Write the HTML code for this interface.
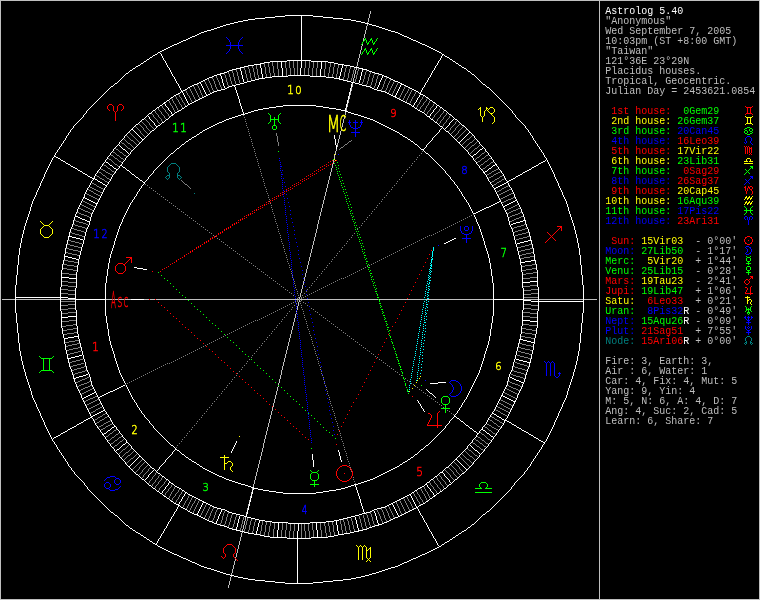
<!DOCTYPE html>
<html><head><meta charset="utf-8"><title>Astrolog 5.40</title>
<style>
html,body{margin:0;padding:0;background:#000;overflow:hidden}
svg{display:block}
.px path{fill:none;stroke-width:1;shape-rendering:crispEdges}
.s{font-family:"Liberation Mono",monospace;font-size:10px;white-space:pre}
.d text{font-family:"DejaVu Sans","Liberation Sans",sans-serif;font-weight:200;vector-effect:non-scaling-stroke}
.w{fill:#ffffff}
.l{fill:#bfbfbf}
.r{fill:#ff0000}
.y{fill:#ffff00}
.g{fill:#00ff00}
.b{fill:#0000ff}
.c{fill:#007f7f}
</style></head>
<body>
<svg width="760" height="600" viewBox="0 0 760 600">
<rect width="760" height="600" fill="#000"/>
<g class="px" transform="translate(0,0.5)">
<path stroke="#007f7f" d="M171 163h5M170 164h1M176 164h1M169 165h1M177 165h1M168 166h1M178 166h1M167 167h1M179 167h1M167 168h1M179 168h1M167 169h1M179 169h1M167 170h1M179 170h1M167 171h1M179 171h1M168 172h1M178 172h1M169 173h1M177 173h1M169 174h1M177 174h1M167 175h3M177 175h3M166 176h1M169 176h1M177 176h1M180 176h1M165 177h1M169 177h1M177 177h1M181 177h1M166 178h1M168 178h1M178 178h1M180 178h1M167 179h1M179 179h1M194 193h1M747 336h3M746 337h1M750 337h1M745 338h1M751 338h1M745 339h1M751 339h1M745 340h1M751 340h1M746 341h1M750 341h1M745 342h2M750 342h2M744 343h1M746 343h1M750 343h1M752 343h1M745 344h1M751 344h1"/>
<path stroke="#bfbfbf" d="M0 0h760M0 1h1M599 1h1M759 1h1M0 2h1M599 2h1M759 2h1M0 3h1M599 3h1M759 3h1M0 4h1M599 4h1M759 4h1M0 5h1M599 5h1M759 5h1M0 6h1M599 6h1M759 6h1M0 7h1M599 7h1M759 7h1M0 8h1M599 8h1M759 8h1M0 9h1M599 9h1M759 9h1M0 10h1M599 10h1M759 10h1M0 11h1M370 11h1M599 11h1M759 11h1M0 12h1M370 12h1M599 12h1M759 12h1M0 13h1M370 13h1M599 13h1M759 13h1M0 14h1M369 14h1M599 14h1M759 14h1M0 15h1M369 15h1M599 15h1M759 15h1M0 16h1M369 16h1M599 16h1M759 16h1M0 17h1M369 17h1M599 17h1M759 17h1M0 18h1M368 18h1M599 18h1M759 18h1M0 19h1M368 19h1M599 19h1M759 19h1M0 20h1M368 20h1M599 20h1M759 20h1M0 21h1M368 21h1M599 21h1M759 21h1M0 22h1M367 22h1M599 22h1M759 22h1M0 23h1M599 23h1M759 23h1M0 24h1M367 24h1M599 24h1M759 24h1M0 25h1M367 25h1M599 25h1M759 25h1M0 26h1M366 26h1M599 26h1M759 26h1M0 27h1M366 27h1M599 27h1M759 27h1M0 28h1M366 28h1M599 28h1M759 28h1M0 29h1M366 29h1M599 29h1M759 29h1M0 30h1M365 30h1M599 30h1M759 30h1M0 31h1M365 31h1M599 31h1M759 31h1M0 32h1M365 32h1M599 32h1M759 32h1M0 33h1M365 33h1M599 33h1M759 33h1M0 34h1M364 34h1M599 34h1M759 34h1M0 35h1M364 35h1M599 35h1M759 35h1M0 36h1M364 36h1M599 36h1M759 36h1M0 37h1M364 37h1M599 37h1M759 37h1M0 38h1M363 38h1M599 38h1M759 38h1M0 39h1M363 39h1M599 39h1M759 39h1M0 40h1M363 40h1M599 40h1M759 40h1M0 41h1M599 41h1M759 41h1M0 42h1M599 42h1M759 42h1M0 43h1M599 43h1M759 43h1M0 44h1M362 44h1M599 44h1M759 44h1M0 45h1M362 45h1M599 45h1M759 45h1M0 46h1M361 46h1M599 46h1M759 46h1M0 47h1M361 47h1M599 47h1M759 47h1M0 48h1M361 48h1M599 48h1M759 48h1M0 49h1M361 49h1M599 49h1M759 49h1M0 50h1M360 50h1M599 50h1M759 50h1M0 51h1M360 51h1M599 51h1M759 51h1M0 52h1M360 52h1M599 52h1M759 52h1M0 53h1M360 53h1M599 53h1M759 53h1M0 54h1M359 54h1M599 54h1M759 54h1M0 55h1M359 55h1M599 55h1M759 55h1M0 56h1M359 56h1M599 56h1M759 56h1M0 57h1M359 57h1M599 57h1M759 57h1M0 58h1M358 58h1M599 58h1M759 58h1M0 59h1M358 59h1M599 59h1M759 59h1M0 60h1M358 60h1M599 60h1M759 60h1M0 61h1M358 61h1M599 61h1M759 61h1M0 62h1M357 62h1M599 62h1M759 62h1M0 63h1M357 63h1M599 63h1M759 63h1M0 64h1M357 64h1M599 64h1M759 64h1M0 65h1M357 65h1M599 65h1M759 65h1M0 66h1M356 66h1M599 66h1M759 66h1M0 67h1M599 67h1M759 67h1M0 68h1M356 68h1M599 68h1M759 68h1M0 69h1M356 69h1M599 69h1M759 69h1M0 70h1M355 70h1M599 70h1M759 70h1M0 71h1M355 71h1M599 71h1M759 71h1M0 72h1M355 72h1M599 72h1M759 72h1M0 73h1M355 73h1M599 73h1M759 73h1M0 74h1M354 74h1M599 74h1M759 74h1M0 75h1M354 75h1M599 75h1M759 75h1M0 76h1M354 76h1M599 76h1M759 76h1M0 77h1M354 77h1M599 77h1M759 77h1M0 78h1M353 78h1M599 78h1M759 78h1M0 79h1M353 79h1M599 79h1M759 79h1M0 80h1M353 80h1M599 80h1M759 80h1M0 81h1M353 81h1M599 81h1M759 81h1M0 82h1M599 82h1M759 82h1M0 83h1M599 83h1M759 83h1M0 84h1M352 84h1M599 84h1M759 84h1M0 85h1M352 85h1M599 85h1M759 85h1M0 86h1M352 86h1M599 86h1M759 86h1M0 87h1M599 87h1M759 87h1M0 88h1M351 88h1M599 88h1M759 88h1M0 89h1M351 89h1M599 89h1M759 89h1M0 90h1M351 90h1M599 90h1M759 90h1M0 91h1M599 91h1M759 91h1M0 92h1M350 92h1M599 92h1M759 92h1M0 93h1M350 93h1M599 93h1M759 93h1M0 94h1M350 94h1M599 94h1M759 94h1M0 95h1M599 95h1M759 95h1M0 96h1M349 96h1M599 96h1M759 96h1M0 97h1M349 97h1M599 97h1M759 97h1M0 98h1M349 98h1M599 98h1M759 98h1M0 99h1M599 99h1M759 99h1M0 100h1M348 100h1M599 100h1M759 100h1M0 101h1M348 101h1M599 101h1M759 101h1M0 102h1M348 102h1M599 102h1M759 102h1M0 103h1M599 103h1M759 103h1M0 104h1M347 104h1M599 104h1M759 104h1M0 105h1M347 105h1M599 105h1M759 105h1M0 106h1M347 106h1M599 106h1M759 106h1M0 107h1M599 107h1M759 107h1M0 108h1M346 108h1M599 108h1M759 108h1M0 109h1M346 109h1M599 109h1M759 109h1M0 110h1M346 110h1M599 110h1M759 110h1M0 111h1M599 111h1M759 111h1M0 112h1M345 112h1M599 112h1M759 112h1M0 113h1M345 113h1M599 113h1M759 113h1M0 114h1M345 114h1M599 114h1M759 114h1M0 115h1M344 115h1M599 115h1M759 115h1M0 116h1M344 116h1M599 116h1M759 116h1M0 117h1M344 117h1M599 117h1M759 117h1M0 118h1M344 118h1M599 118h1M759 118h1M0 119h1M343 119h1M599 119h1M759 119h1M0 120h1M343 120h1M599 120h1M759 120h1M0 121h1M343 121h1M599 121h1M759 121h1M0 122h1M343 122h1M599 122h1M759 122h1M0 123h1M342 123h1M599 123h1M759 123h1M0 124h1M342 124h1M599 124h1M759 124h1M0 125h1M342 125h1M599 125h1M759 125h1M0 126h1M342 126h1M599 126h1M759 126h1M0 127h1M341 127h1M599 127h1M759 127h1M0 128h1M341 128h1M599 128h1M759 128h1M0 129h1M341 129h1M599 129h1M759 129h1M0 130h1M341 130h1M599 130h1M759 130h1M0 131h1M340 131h1M599 131h1M759 131h1M0 132h1M340 132h1M599 132h1M759 132h1M0 133h1M340 133h1M599 133h1M759 133h1M0 134h1M340 134h1M599 134h1M759 134h1M0 135h1M339 135h1M599 135h1M759 135h1M0 136h1M339 136h1M599 136h1M759 136h1M0 137h1M339 137h1M599 137h1M759 137h1M0 138h1M339 138h1M599 138h1M759 138h1M0 139h1M338 139h1M599 139h1M759 139h1M0 140h1M338 140h1M599 140h1M759 140h1M0 141h1M338 141h1M599 141h1M759 141h1M0 142h1M338 142h1M599 142h1M759 142h1M0 143h1M337 143h1M599 143h1M759 143h1M0 144h1M337 144h1M599 144h1M759 144h1M0 145h1M337 145h1M599 145h1M759 145h1M0 146h1M337 146h1M599 146h1M759 146h1M0 147h1M599 147h1M759 147h1M0 148h1M599 148h1M759 148h1M0 149h1M336 149h1M599 149h1M759 149h1M0 150h1M336 150h1M599 150h1M759 150h1M0 151h1M335 151h1M599 151h1M759 151h1M0 152h1M335 152h1M599 152h1M759 152h1M0 153h1M335 153h1M599 153h1M759 153h1M0 154h1M335 154h1M599 154h1M759 154h1M0 155h1M334 155h1M599 155h1M759 155h1M0 156h1M334 156h1M599 156h1M759 156h1M0 157h1M334 157h1M599 157h1M759 157h1M0 158h1M334 158h1M599 158h1M759 158h1M0 159h1M599 159h1M759 159h1M0 160h1M333 160h1M599 160h1M759 160h1M0 161h1M333 161h1M599 161h1M759 161h1M0 162h1M333 162h1M599 162h1M759 162h1M0 163h1M333 163h1M599 163h1M759 163h1M0 164h1M332 164h1M599 164h1M759 164h1M0 165h1M332 165h1M599 165h1M759 165h1M0 166h1M332 166h1M599 166h1M759 166h1M0 167h1M332 167h1M599 167h1M759 167h1M0 168h1M331 168h1M599 168h1M759 168h1M0 169h1M331 169h1M599 169h1M759 169h1M0 170h1M331 170h1M599 170h1M759 170h1M0 171h1M331 171h1M599 171h1M759 171h1M0 172h1M330 172h1M599 172h1M759 172h1M0 173h1M330 173h1M599 173h1M759 173h1M0 174h1M330 174h1M599 174h1M759 174h1M0 175h1M330 175h1M599 175h1M759 175h1M0 176h1M329 176h1M599 176h1M759 176h1M0 177h1M329 177h1M599 177h1M759 177h1M0 178h1M329 178h1M599 178h1M759 178h1M0 179h1M329 179h1M599 179h1M759 179h1M0 180h1M328 180h1M599 180h1M759 180h1M0 181h1M328 181h1M599 181h1M759 181h1M0 182h1M328 182h1M599 182h1M759 182h1M0 183h1M328 183h1M599 183h1M759 183h1M0 184h1M327 184h1M599 184h1M759 184h1M0 185h1M327 185h1M599 185h1M759 185h1M0 186h1M327 186h1M599 186h1M759 186h1M0 187h1M327 187h1M599 187h1M759 187h1M0 188h1M326 188h1M599 188h1M759 188h1M0 189h1M326 189h1M599 189h1M759 189h1M0 190h1M326 190h1M599 190h1M759 190h1M0 191h1M326 191h1M599 191h1M759 191h1M0 192h1M325 192h1M599 192h1M759 192h1M0 193h1M325 193h1M599 193h1M759 193h1M0 194h1M325 194h1M599 194h1M759 194h1M0 195h1M325 195h1M599 195h1M759 195h1M0 196h1M324 196h1M599 196h1M759 196h1M0 197h1M324 197h1M599 197h1M759 197h1M0 198h1M324 198h1M599 198h1M759 198h1M0 199h1M324 199h1M599 199h1M759 199h1M0 200h1M323 200h1M599 200h1M759 200h1M0 201h1M323 201h1M599 201h1M759 201h1M0 202h1M323 202h1M599 202h1M759 202h1M0 203h1M323 203h1M599 203h1M759 203h1M0 204h1M322 204h1M599 204h1M759 204h1M0 205h1M322 205h1M599 205h1M759 205h1M0 206h1M322 206h1M599 206h1M759 206h1M0 207h1M322 207h1M599 207h1M759 207h1M0 208h1M321 208h1M599 208h1M759 208h1M0 209h1M321 209h1M599 209h1M759 209h1M0 210h1M321 210h1M599 210h1M759 210h1M0 211h1M321 211h1M599 211h1M759 211h1M0 212h1M320 212h1M599 212h1M759 212h1M0 213h1M320 213h1M599 213h1M759 213h1M0 214h1M320 214h1M599 214h1M759 214h1M0 215h1M320 215h1M599 215h1M759 215h1M0 216h1M319 216h1M599 216h1M759 216h1M0 217h1M319 217h1M599 217h1M759 217h1M0 218h1M319 218h1M599 218h1M759 218h1M0 219h1M319 219h1M599 219h1M759 219h1M0 220h1M318 220h1M599 220h1M759 220h1M0 221h1M318 221h1M599 221h1M759 221h1M0 222h1M318 222h1M599 222h1M759 222h1M0 223h1M318 223h1M599 223h1M759 223h1M0 224h1M317 224h1M599 224h1M759 224h1M0 225h1M317 225h1M599 225h1M759 225h1M0 226h1M317 226h1M599 226h1M759 226h1M0 227h1M317 227h1M599 227h1M759 227h1M0 228h1M317 228h1M599 228h1M759 228h1M0 229h1M316 229h1M599 229h1M759 229h1M0 230h1M316 230h1M599 230h1M759 230h1M0 231h1M316 231h1M599 231h1M759 231h1M0 232h1M316 232h1M599 232h1M759 232h1M0 233h1M315 233h1M599 233h1M759 233h1M0 234h1M315 234h1M599 234h1M759 234h1M0 235h1M315 235h1M599 235h1M759 235h1M0 236h1M315 236h1M599 236h1M759 236h1M0 237h1M314 237h1M599 237h1M759 237h1M0 238h1M314 238h1M599 238h1M759 238h1M0 239h1M314 239h1M599 239h1M759 239h1M0 240h1M314 240h1M599 240h1M759 240h1M0 241h1M313 241h1M599 241h1M759 241h1M0 242h1M313 242h1M599 242h1M759 242h1M0 243h1M313 243h1M599 243h1M759 243h1M0 244h1M313 244h1M599 244h1M759 244h1M0 245h1M312 245h1M599 245h1M759 245h1M0 246h1M312 246h1M599 246h1M759 246h1M0 247h1M312 247h1M599 247h1M759 247h1M0 248h1M312 248h1M599 248h1M759 248h1M0 249h1M311 249h1M599 249h1M759 249h1M0 250h1M311 250h1M599 250h1M759 250h1M0 251h1M311 251h1M599 251h1M759 251h1M0 252h1M311 252h1M599 252h1M759 252h1M0 253h1M310 253h1M599 253h1M759 253h1M0 254h1M310 254h1M599 254h1M759 254h1M0 255h1M310 255h1M599 255h1M759 255h1M0 256h1M310 256h1M599 256h1M759 256h1M0 257h1M309 257h1M599 257h1M759 257h1M0 258h1M309 258h1M599 258h1M759 258h1M0 259h1M309 259h1M599 259h1M759 259h1M0 260h1M309 260h1M599 260h1M759 260h1M0 261h1M308 261h1M599 261h1M759 261h1M0 262h1M308 262h1M599 262h1M759 262h1M0 263h1M308 263h1M599 263h1M759 263h1M0 264h1M308 264h1M599 264h1M759 264h1M0 265h1M307 265h1M599 265h1M759 265h1M0 266h1M307 266h1M599 266h1M759 266h1M0 267h1M307 267h1M599 267h1M759 267h1M0 268h1M307 268h1M599 268h1M759 268h1M0 269h1M306 269h1M599 269h1M759 269h1M0 270h1M306 270h1M599 270h1M759 270h1M0 271h1M306 271h1M599 271h1M759 271h1M0 272h1M306 272h1M599 272h1M759 272h1M0 273h1M305 273h1M599 273h1M759 273h1M0 274h1M305 274h1M599 274h1M759 274h1M0 275h1M305 275h1M599 275h1M759 275h1M0 276h1M305 276h1M599 276h1M759 276h1M0 277h1M304 277h1M599 277h1M759 277h1M0 278h1M304 278h1M599 278h1M759 278h1M0 279h1M304 279h1M599 279h1M759 279h1M0 280h1M304 280h1M599 280h1M759 280h1M0 281h1M303 281h1M599 281h1M759 281h1M0 282h1M303 282h1M599 282h1M759 282h1M0 283h1M303 283h1M599 283h1M759 283h1M0 284h1M303 284h1M599 284h1M759 284h1M0 285h1M302 285h1M599 285h1M759 285h1M0 286h1M302 286h1M599 286h1M759 286h1M0 287h1M302 287h1M599 287h1M759 287h1M0 288h1M302 288h1M599 288h1M759 288h1M0 289h1M301 289h1M599 289h1M759 289h1M0 290h1M301 290h1M599 290h1M759 290h1M0 291h1M301 291h1M599 291h1M759 291h1M0 292h1M301 292h1M599 292h1M759 292h1M0 293h1M300 293h1M599 293h1M759 293h1M0 294h1M300 294h1M599 294h1M759 294h1M0 295h1M300 295h1M599 295h1M759 295h1M0 296h1M300 296h1M599 296h1M759 296h1M0 297h1M299 297h1M599 297h1M759 297h1M0 298h1M299 298h1M599 298h1M759 298h1M0 299h1M2 299h13M16 299h44M61 299h14M106 299h25M144 299h5M150 299h5M156 299h143M300 299h78M379 299h45M425 299h68M524 299h14M539 299h44M584 299h13M599 299h1M759 299h1M0 300h1M299 300h1M599 300h1M759 300h1M0 301h1M299 301h1M599 301h1M759 301h1M0 302h1M298 302h1M599 302h1M759 302h1M0 303h1M298 303h1M599 303h1M759 303h1M0 304h1M298 304h1M599 304h1M759 304h1M0 305h1M298 305h1M599 305h1M759 305h1M0 306h1M297 306h1M599 306h1M759 306h1M0 307h1M297 307h1M599 307h1M759 307h1M0 308h1M297 308h1M599 308h1M759 308h1M0 309h1M297 309h1M599 309h1M759 309h1M0 310h1M599 310h1M759 310h1M0 311h1M296 311h1M599 311h1M759 311h1M0 312h1M599 312h1M759 312h1M0 313h1M296 313h1M599 313h1M759 313h1M0 314h1M295 314h1M599 314h1M759 314h1M0 315h1M295 315h1M599 315h1M759 315h1M0 316h1M295 316h1M599 316h1M759 316h1M0 317h1M295 317h1M599 317h1M759 317h1M0 318h1M294 318h1M599 318h1M759 318h1M0 319h1M294 319h1M599 319h1M759 319h1M0 320h1M294 320h1M599 320h1M759 320h1M0 321h1M294 321h1M599 321h1M759 321h1M0 322h1M293 322h1M599 322h1M759 322h1M0 323h1M293 323h1M599 323h1M759 323h1M0 324h1M293 324h1M599 324h1M759 324h1M0 325h1M293 325h1M599 325h1M759 325h1M0 326h1M292 326h1M599 326h1M759 326h1M0 327h1M292 327h1M599 327h1M759 327h1M0 328h1M292 328h1M599 328h1M759 328h1M0 329h1M292 329h1M599 329h1M759 329h1M0 330h1M291 330h1M599 330h1M759 330h1M0 331h1M291 331h1M599 331h1M759 331h1M0 332h1M291 332h1M599 332h1M759 332h1M0 333h1M291 333h1M599 333h1M759 333h1M0 334h1M290 334h1M599 334h1M759 334h1M0 335h1M290 335h1M599 335h1M759 335h1M0 336h1M290 336h1M599 336h1M759 336h1M0 337h1M290 337h1M599 337h1M759 337h1M0 338h1M289 338h1M599 338h1M759 338h1M0 339h1M289 339h1M599 339h1M759 339h1M0 340h1M289 340h1M599 340h1M759 340h1M0 341h1M289 341h1M599 341h1M759 341h1M0 342h1M288 342h1M599 342h1M759 342h1M0 343h1M288 343h1M599 343h1M759 343h1M0 344h1M288 344h1M599 344h1M759 344h1M0 345h1M288 345h1M599 345h1M759 345h1M0 346h1M287 346h1M599 346h1M759 346h1M0 347h1M287 347h1M599 347h1M759 347h1M0 348h1M287 348h1M599 348h1M759 348h1M0 349h1M287 349h1M599 349h1M759 349h1M0 350h1M286 350h1M599 350h1M759 350h1M0 351h1M286 351h1M599 351h1M759 351h1M0 352h1M286 352h1M599 352h1M759 352h1M0 353h1M286 353h1M599 353h1M759 353h1M0 354h1M285 354h1M599 354h1M759 354h1M0 355h1M285 355h1M599 355h1M759 355h1M0 356h1M285 356h1M599 356h1M759 356h1M0 357h1M285 357h1M599 357h1M759 357h1M0 358h1M284 358h1M599 358h1M759 358h1M0 359h1M284 359h1M599 359h1M759 359h1M0 360h1M284 360h1M599 360h1M759 360h1M0 361h1M284 361h1M599 361h1M759 361h1M0 362h1M283 362h1M599 362h1M759 362h1M0 363h1M283 363h1M599 363h1M759 363h1M0 364h1M283 364h1M599 364h1M759 364h1M0 365h1M283 365h1M599 365h1M759 365h1M0 366h1M282 366h1M599 366h1M759 366h1M0 367h1M282 367h1M599 367h1M759 367h1M0 368h1M282 368h1M599 368h1M759 368h1M0 369h1M282 369h1M599 369h1M759 369h1M0 370h1M281 370h1M599 370h1M759 370h1M0 371h1M281 371h1M599 371h1M759 371h1M0 372h1M281 372h1M599 372h1M759 372h1M0 373h1M281 373h1M599 373h1M759 373h1M0 374h1M281 374h1M599 374h1M759 374h1M0 375h1M280 375h1M599 375h1M759 375h1M0 376h1M280 376h1M599 376h1M759 376h1M0 377h1M280 377h1M599 377h1M759 377h1M0 378h1M280 378h1M599 378h1M759 378h1M0 379h1M279 379h1M599 379h1M759 379h1M0 380h1M279 380h1M599 380h1M759 380h1M0 381h1M279 381h1M599 381h1M759 381h1M0 382h1M279 382h1M599 382h1M759 382h1M0 383h1M278 383h1M599 383h1M759 383h1M0 384h1M278 384h1M599 384h1M759 384h1M0 385h1M599 385h1M759 385h1M0 386h1M278 386h1M599 386h1M759 386h1M0 387h1M277 387h1M599 387h1M759 387h1M0 388h1M277 388h1M599 388h1M759 388h1M0 389h1M277 389h1M599 389h1M759 389h1M0 390h1M277 390h1M599 390h1M759 390h1M0 391h1M276 391h1M599 391h1M759 391h1M0 392h1M276 392h1M599 392h1M759 392h1M0 393h1M276 393h1M599 393h1M759 393h1M0 394h1M276 394h1M599 394h1M759 394h1M0 395h1M275 395h1M599 395h1M759 395h1M0 396h1M275 396h1M599 396h1M759 396h1M0 397h1M275 397h1M599 397h1M759 397h1M0 398h1M275 398h1M599 398h1M759 398h1M0 399h1M274 399h1M599 399h1M759 399h1M0 400h1M274 400h1M599 400h1M759 400h1M0 401h1M274 401h1M599 401h1M759 401h1M0 402h1M274 402h1M599 402h1M759 402h1M0 403h1M273 403h1M599 403h1M759 403h1M0 404h1M273 404h1M599 404h1M759 404h1M0 405h1M273 405h1M599 405h1M759 405h1M0 406h1M273 406h1M599 406h1M759 406h1M0 407h1M272 407h1M599 407h1M759 407h1M0 408h1M272 408h1M599 408h1M759 408h1M0 409h1M272 409h1M599 409h1M759 409h1M0 410h1M272 410h1M599 410h1M759 410h1M0 411h1M271 411h1M599 411h1M759 411h1M0 412h1M271 412h1M599 412h1M759 412h1M0 413h1M271 413h1M599 413h1M759 413h1M0 414h1M271 414h1M599 414h1M759 414h1M0 415h1M270 415h1M599 415h1M759 415h1M0 416h1M270 416h1M599 416h1M759 416h1M0 417h1M270 417h1M599 417h1M759 417h1M0 418h1M270 418h1M599 418h1M759 418h1M0 419h1M269 419h1M599 419h1M759 419h1M0 420h1M269 420h1M599 420h1M759 420h1M0 421h1M269 421h1M599 421h1M759 421h1M0 422h1M269 422h1M599 422h1M759 422h1M0 423h1M268 423h1M599 423h1M759 423h1M0 424h1M268 424h1M599 424h1M759 424h1M0 425h1M268 425h1M599 425h1M759 425h1M0 426h1M268 426h1M599 426h1M759 426h1M0 427h1M267 427h1M599 427h1M759 427h1M0 428h1M267 428h1M599 428h1M759 428h1M0 429h1M267 429h1M599 429h1M759 429h1M0 430h1M267 430h1M599 430h1M759 430h1M0 431h1M266 431h1M599 431h1M759 431h1M0 432h1M266 432h1M599 432h1M759 432h1M0 433h1M266 433h1M599 433h1M759 433h1M0 434h1M266 434h1M599 434h1M759 434h1M0 435h1M265 435h1M599 435h1M759 435h1M0 436h1M265 436h1M599 436h1M759 436h1M0 437h1M265 437h1M599 437h1M759 437h1M0 438h1M265 438h1M599 438h1M759 438h1M0 439h1M264 439h1M599 439h1M759 439h1M0 440h1M264 440h1M599 440h1M759 440h1M0 441h1M264 441h1M599 441h1M759 441h1M0 442h1M264 442h1M599 442h1M759 442h1M0 443h1M263 443h1M599 443h1M759 443h1M0 444h1M263 444h1M599 444h1M759 444h1M0 445h1M263 445h1M599 445h1M759 445h1M0 446h1M263 446h1M599 446h1M759 446h1M0 447h1M263 447h1M599 447h1M759 447h1M0 448h1M262 448h1M599 448h1M759 448h1M0 449h1M262 449h1M599 449h1M759 449h1M0 450h1M262 450h1M599 450h1M759 450h1M0 451h1M262 451h1M599 451h1M759 451h1M0 452h1M261 452h1M599 452h1M759 452h1M0 453h1M261 453h1M599 453h1M759 453h1M0 454h1M261 454h1M599 454h1M759 454h1M0 455h1M261 455h1M599 455h1M759 455h1M0 456h1M260 456h1M599 456h1M759 456h1M0 457h1M260 457h1M599 457h1M759 457h1M0 458h1M260 458h1M599 458h1M759 458h1M0 459h1M260 459h1M599 459h1M759 459h1M0 460h1M259 460h1M599 460h1M759 460h1M0 461h1M259 461h1M599 461h1M759 461h1M0 462h1M259 462h1M599 462h1M759 462h1M0 463h1M259 463h1M599 463h1M759 463h1M0 464h1M258 464h1M599 464h1M759 464h1M0 465h1M258 465h1M599 465h1M759 465h1M0 466h1M258 466h1M599 466h1M759 466h1M0 467h1M258 467h1M599 467h1M759 467h1M0 468h1M257 468h1M599 468h1M759 468h1M0 469h1M257 469h1M599 469h1M759 469h1M0 470h1M257 470h1M599 470h1M759 470h1M0 471h1M257 471h1M599 471h1M759 471h1M0 472h1M256 472h1M599 472h1M759 472h1M0 473h1M256 473h1M599 473h1M759 473h1M0 474h1M256 474h1M599 474h1M759 474h1M0 475h1M256 475h1M599 475h1M759 475h1M0 476h1M255 476h1M599 476h1M759 476h1M0 477h1M255 477h1M599 477h1M759 477h1M0 478h1M255 478h1M599 478h1M759 478h1M0 479h1M255 479h1M599 479h1M759 479h1M0 480h1M254 480h1M599 480h1M759 480h1M0 481h1M254 481h1M599 481h1M759 481h1M0 482h1M254 482h1M599 482h1M759 482h1M0 483h1M254 483h1M599 483h1M759 483h1M0 484h1M253 484h1M599 484h1M759 484h1M0 485h1M253 485h1M599 485h1M759 485h1M0 486h1M253 486h1M599 486h1M759 486h1M0 487h1M599 487h1M759 487h1M0 488h1M252 488h1M599 488h1M759 488h1M0 489h1M252 489h1M599 489h1M759 489h1M0 490h1M599 490h1M759 490h1M0 491h1M599 491h1M759 491h1M0 492h1M251 492h1M599 492h1M759 492h1M0 493h1M251 493h1M599 493h1M759 493h1M0 494h1M599 494h1M759 494h1M0 495h1M599 495h1M759 495h1M0 496h1M250 496h1M599 496h1M759 496h1M0 497h1M250 497h1M599 497h1M759 497h1M0 498h1M599 498h1M759 498h1M0 499h1M599 499h1M759 499h1M0 500h1M249 500h1M599 500h1M759 500h1M0 501h1M249 501h1M599 501h1M759 501h1M0 502h1M599 502h1M759 502h1M0 503h1M599 503h1M759 503h1M0 504h1M248 504h1M599 504h1M759 504h1M0 505h1M248 505h1M599 505h1M759 505h1M0 506h1M599 506h1M759 506h1M0 507h1M599 507h1M759 507h1M0 508h1M247 508h1M599 508h1M759 508h1M0 509h1M247 509h1M599 509h1M759 509h1M0 510h1M599 510h1M759 510h1M0 511h1M599 511h1M759 511h1M0 512h1M246 512h1M599 512h1M759 512h1M0 513h1M246 513h1M599 513h1M759 513h1M0 514h1M599 514h1M759 514h1M0 515h1M599 515h1M759 515h1M0 516h1M599 516h1M759 516h1M0 517h1M245 517h1M599 517h1M759 517h1M0 518h1M245 518h1M599 518h1M759 518h1M0 519h1M245 519h1M599 519h1M759 519h1M0 520h1M245 520h1M599 520h1M759 520h1M0 521h1M244 521h1M599 521h1M759 521h1M0 522h1M244 522h1M599 522h1M759 522h1M0 523h1M244 523h1M599 523h1M759 523h1M0 524h1M244 524h1M599 524h1M759 524h1M0 525h1M243 525h1M599 525h1M759 525h1M0 526h1M243 526h1M599 526h1M759 526h1M0 527h1M243 527h1M599 527h1M759 527h1M0 528h1M243 528h1M599 528h1M759 528h1M0 529h1M242 529h1M599 529h1M759 529h1M0 530h1M242 530h1M599 530h1M759 530h1M0 531h1M599 531h1M759 531h1M0 532h1M242 532h1M599 532h1M759 532h1M0 533h1M241 533h1M599 533h1M759 533h1M0 534h1M241 534h1M599 534h1M759 534h1M0 535h1M241 535h1M599 535h1M759 535h1M0 536h1M241 536h1M599 536h1M759 536h1M0 537h1M240 537h1M599 537h1M759 537h1M0 538h1M240 538h1M599 538h1M759 538h1M0 539h1M240 539h1M599 539h1M759 539h1M0 540h1M240 540h1M599 540h1M759 540h1M0 541h1M239 541h1M599 541h1M759 541h1M0 542h1M239 542h1M599 542h1M759 542h1M0 543h1M239 543h1M599 543h1M759 543h1M0 544h1M239 544h1M599 544h1M759 544h1M0 545h1M238 545h1M599 545h1M759 545h1M0 546h1M238 546h1M599 546h1M759 546h1M0 547h1M238 547h1M599 547h1M759 547h1M0 548h1M238 548h1M599 548h1M759 548h1M0 549h1M237 549h1M599 549h1M759 549h1M0 550h1M237 550h1M599 550h1M759 550h1M0 551h1M237 551h1M599 551h1M759 551h1M0 552h1M237 552h1M599 552h1M759 552h1M0 553h1M236 553h1M599 553h1M759 553h1M0 554h1M236 554h1M599 554h1M759 554h1M0 555h1M236 555h1M599 555h1M759 555h1M0 556h1M236 556h1M599 556h1M759 556h1M0 557h1M235 557h1M599 557h1M759 557h1M0 558h1M599 558h1M759 558h1M0 559h1M235 559h1M599 559h1M759 559h1M0 560h1M235 560h1M599 560h1M759 560h1M0 561h1M234 561h1M599 561h1M759 561h1M0 562h1M234 562h1M599 562h1M759 562h1M0 563h1M234 563h1M599 563h1M759 563h1M0 564h1M234 564h1M599 564h1M759 564h1M0 565h1M233 565h1M599 565h1M759 565h1M0 566h1M233 566h1M599 566h1M759 566h1M0 567h1M233 567h1M599 567h1M759 567h1M0 568h1M233 568h1M599 568h1M759 568h1M0 569h1M232 569h1M599 569h1M759 569h1M0 570h1M232 570h1M599 570h1M759 570h1M0 571h1M232 571h1M599 571h1M759 571h1M0 572h1M232 572h1M599 572h1M759 572h1M0 573h1M231 573h1M599 573h1M759 573h1M0 574h1M231 574h1M599 574h1M759 574h1M0 575h1M599 575h1M759 575h1M0 576h1M231 576h1M599 576h1M759 576h1M0 577h1M230 577h1M599 577h1M759 577h1M0 578h1M230 578h1M599 578h1M759 578h1M0 579h1M230 579h1M599 579h1M759 579h1M0 580h1M230 580h1M599 580h1M759 580h1M0 581h1M229 581h1M599 581h1M759 581h1M0 582h1M229 582h1M599 582h1M759 582h1M0 583h1M229 583h1M599 583h1M759 583h1M0 584h1M229 584h1M599 584h1M759 584h1M0 585h1M228 585h1M599 585h1M759 585h1M0 586h1M228 586h1M599 586h1M759 586h1M0 587h1M228 587h1M599 587h1M759 587h1M0 588h1M599 588h1M759 588h1M0 589h1M599 589h1M759 589h1M0 590h1M599 590h1M759 590h1M0 591h1M599 591h1M759 591h1M0 592h1M599 592h1M759 592h1M0 593h1M599 593h1M759 593h1M0 594h1M599 594h1M759 594h1M0 595h1M599 595h1M759 595h1M0 596h1M599 596h1M759 596h1M0 597h1M599 597h1M759 597h1M0 598h1M599 598h1M759 598h1M0 599h760"/>
<path stroke="#7f7f7f" d="M289 61h1M293 61h1M297 61h1M305 61h1M309 61h1M272 62h1M277 62h1M285 62h1M289 62h1M293 62h1M297 62h1M305 62h1M309 62h1M313 62h1M317 62h1M325 62h1M264 63h1M268 63h1M272 63h1M277 63h1M285 63h1M289 63h1M293 63h1M297 63h1M305 63h1M309 63h1M313 63h1M317 63h1M325 63h1M330 63h1M264 64h1M268 64h1M272 64h1M277 64h1M285 64h1M289 64h1M293 64h1M297 64h1M305 64h1M309 64h1M313 64h1M317 64h1M325 64h1M330 64h1M334 64h1M256 65h1M264 65h1M268 65h1M272 65h1M277 65h1M285 65h1M289 65h1M293 65h1M297 65h1M305 65h1M309 65h1M313 65h1M317 65h1M325 65h1M330 65h1M334 65h1M338 65h1M248 66h1M252 66h1M256 66h1M264 66h1M268 66h1M273 66h1M277 66h1M285 66h1M289 66h1M293 66h1M297 66h1M305 66h1M309 66h1M313 66h1M317 66h1M325 66h1M330 66h1M334 66h1M338 66h1M346 66h1M244 67h1M248 67h1M252 67h1M256 67h1M265 67h1M269 67h1M273 67h1M277 67h1M285 67h1M289 67h1M293 67h1M297 67h1M305 67h1M309 67h1M313 67h1M317 67h1M325 67h1M329 67h1M333 67h1M338 67h1M346 67h1M350 67h1M244 68h1M248 68h1M253 68h1M256 68h1M265 68h1M269 68h1M273 68h1M277 68h1M286 68h1M290 68h1M294 68h1M297 68h1M304 68h1M308 68h1M312 68h1M316 68h1M325 68h1M329 68h1M333 68h1M337 68h1M345 68h1M350 68h1M354 68h1M358 68h1M236 69h1M244 69h1M249 69h1M253 69h1M257 69h1M265 69h1M269 69h1M273 69h1M278 69h1M286 69h1M290 69h1M294 69h1M297 69h1M304 69h1M308 69h1M312 69h1M316 69h1M324 69h1M329 69h1M333 69h1M337 69h1M345 69h1M349 69h1M354 69h1M358 69h1M232 70h1M236 70h1M245 70h1M249 70h1M253 70h1M257 70h1M265 70h1M269 70h1M273 70h1M278 70h1M286 70h1M290 70h1M294 70h1M297 70h1M304 70h1M308 70h1M312 70h1M316 70h1M324 70h1M329 70h1M333 70h1M337 70h1M345 70h1M349 70h1M353 70h1M358 70h1M366 70h1M232 71h1M236 71h1M245 71h1M249 71h1M253 71h1M257 71h1M265 71h1M269 71h1M273 71h1M278 71h1M286 71h1M290 71h1M294 71h1M297 71h1M304 71h1M308 71h1M312 71h1M316 71h1M324 71h1M329 71h1M333 71h1M337 71h1M345 71h1M349 71h1M353 71h1M357 71h1M366 71h1M228 72h1M232 72h1M237 72h1M245 72h1M249 72h1M254 72h1M257 72h1M265 72h1M269 72h1M273 72h1M278 72h1M286 72h1M290 72h1M294 72h1M297 72h1M304 72h1M308 72h1M312 72h1M316 72h1M324 72h1M329 72h1M333 72h1M337 72h1M344 72h1M349 72h1M353 72h1M357 72h1M365 72h1M370 72h1M224 73h1M228 73h1M233 73h1M237 73h1M245 73h1M250 73h1M254 73h1M257 73h1M265 73h1M270 73h1M274 73h1M278 73h1M286 73h1M290 73h1M294 73h1M297 73h1M304 73h1M308 73h1M312 73h1M316 73h1M324 73h1M328 73h1M333 73h1M337 73h1M344 73h1M348 73h1M353 73h1M357 73h1M365 73h1M370 73h1M374 73h1M224 74h1M229 74h1M233 74h1M237 74h1M246 74h1M250 74h1M254 74h1M257 74h1M266 74h1M270 74h1M274 74h1M278 74h1M286 74h1M290 74h1M294 74h1M297 74h1M304 74h1M308 74h1M312 74h1M316 74h1M324 74h1M328 74h1M332 74h1M336 74h1M344 74h1M348 74h1M352 74h1M357 74h1M365 74h1M369 74h1M374 74h1M378 74h1M225 75h1M229 75h1M233 75h1M237 75h1M246 75h1M250 75h1M254 75h1M258 75h1M266 75h1M270 75h1M274 75h1M278 75h1M286 75h1M312 75h1M316 75h1M324 75h1M328 75h1M332 75h1M336 75h1M344 75h1M348 75h1M352 75h1M356 75h1M364 75h1M369 75h1M373 75h1M378 75h1M216 76h1M225 76h1M229 76h1M233 76h1M238 76h1M246 76h1M250 76h1M254 76h1M258 76h1M266 76h1M270 76h1M328 76h1M332 76h1M336 76h1M344 76h1M348 76h1M352 76h1M356 76h1M364 76h1M369 76h1M373 76h1M377 76h1M212 77h1M216 77h1M225 77h1M230 77h1M234 77h1M238 77h1M246 77h1M250 77h1M255 77h1M258 77h1M336 77h1M343 77h1M348 77h1M352 77h1M356 77h1M364 77h1M368 77h1M373 77h1M377 77h1M386 77h1M212 78h1M217 78h1M226 78h1M230 78h1M234 78h1M238 78h1M247 78h1M251 78h1M255 78h1M258 78h1M343 78h1M347 78h1M351 78h1M356 78h1M364 78h1M368 78h1M372 78h1M377 78h1M386 78h1M208 79h1M213 79h1M217 79h1M226 79h1M230 79h1M234 79h1M238 79h1M247 79h1M251 79h1M343 79h1M347 79h1M351 79h1M355 79h1M363 79h1M368 79h1M372 79h1M376 79h1M385 79h1M390 79h1M208 80h1M213 80h1M218 80h1M226 80h1M230 80h1M234 80h1M239 80h1M247 80h1M347 80h1M351 80h1M355 80h1M363 80h1M368 80h1M372 80h1M376 80h1M385 80h1M390 80h1M204 81h1M209 81h1M214 81h1M218 81h1M226 81h1M231 81h1M235 81h1M239 81h1M355 81h1M363 81h1M367 81h1M372 81h1M376 81h1M384 81h1M389 81h1M394 81h1M205 82h1M209 82h1M214 82h1M219 82h1M227 82h1M231 82h1M235 82h1M239 82h1M362 82h1M367 82h1M371 82h1M376 82h1M384 82h1M389 82h1M393 82h1M205 83h1M210 83h1M214 83h1M219 83h1M227 83h1M231 83h1M235 83h1M362 83h1M367 83h1M371 83h1M375 83h1M384 83h1M388 83h1M393 83h1M397 83h1M197 84h1M206 84h1M210 84h1M215 84h1M219 84h1M227 84h1M232 84h1M366 84h1M371 84h1M375 84h1M383 84h1M388 84h1M392 84h1M397 84h1M197 85h1M206 85h1M211 85h1M215 85h1M220 85h1M228 85h1M366 85h1M370 85h1M375 85h1M383 85h1M387 85h1M392 85h1M396 85h1M193 86h1M198 86h1M207 86h1M211 86h1M215 86h1M220 86h1M228 86h1M370 86h1M374 86h1M383 86h1M387 86h1M391 86h1M396 86h1M405 86h1M194 87h1M198 87h1M207 87h1M211 87h1M216 87h1M221 87h1M374 87h1M382 87h1M387 87h1M391 87h1M395 87h1M404 87h1M189 88h1M194 88h1M199 88h1M208 88h1M212 88h1M216 88h1M221 88h1M382 88h1M386 88h1M390 88h1M395 88h1M404 88h1M409 88h1M190 89h1M195 89h1M199 89h1M208 89h1M212 89h1M217 89h1M381 89h1M386 89h1M390 89h1M394 89h1M403 89h1M408 89h1M185 90h1M190 90h1M195 90h1M200 90h1M209 90h1M213 90h1M381 90h1M385 90h1M389 90h1M394 90h1M403 90h1M408 90h1M411 90h1M186 91h1M191 91h1M196 91h1M200 91h1M209 91h1M213 91h1M385 91h1M389 91h1M393 91h1M402 91h1M407 91h1M411 91h1M186 92h1M191 92h1M196 92h1M200 92h1M210 92h1M388 92h1M393 92h1M402 92h1M407 92h1M410 92h1M415 92h1M187 93h1M192 93h1M197 93h1M201 93h1M392 93h1M401 93h1M406 93h1M410 93h1M415 93h1M178 94h1M187 94h1M192 94h1M197 94h1M201 94h1M392 94h1M401 94h1M405 94h1M409 94h1M414 94h1M179 95h1M188 95h1M193 95h1M198 95h1M202 95h1M400 95h1M405 95h1M409 95h1M414 95h1M175 96h1M179 96h1M189 96h1M193 96h1M198 96h1M202 96h1M400 96h1M404 96h1M408 96h1M413 96h1M423 96h1M176 97h1M180 97h1M189 97h1M194 97h1M199 97h1M399 97h1M404 97h1M408 97h1M412 97h1M422 97h1M171 98h1M176 98h1M181 98h1M190 98h1M194 98h1M199 98h1M399 98h1M403 98h1M407 98h1M412 98h1M422 98h1M427 98h1M172 99h1M177 99h1M181 99h1M190 99h1M195 99h1M403 99h1M407 99h1M411 99h1M421 99h1M426 99h1M172 100h1M178 100h1M182 100h1M191 100h1M195 100h1M406 100h1M411 100h1M420 100h1M426 100h1M169 101h1M173 101h1M178 101h1M182 101h1M191 101h1M406 101h1M410 101h1M420 101h1M425 101h1M429 101h1M169 102h1M173 102h1M179 102h1M183 102h1M410 102h1M419 102h1M424 102h1M429 102h1M170 103h1M174 103h1M179 103h1M184 103h1M409 103h1M419 103h1M423 103h1M428 103h1M434 103h1M170 104h1M175 104h1M180 104h1M184 104h1M418 104h1M423 104h1M428 104h1M433 104h1M171 105h1M175 105h1M181 105h1M185 105h1M417 105h1M422 105h1M427 105h1M433 105h1M162 106h1M172 106h1M176 106h1M181 106h1M417 106h1M421 106h1M426 106h1M432 106h1M162 107h1M172 107h1M176 107h1M182 107h1M416 107h1M420 107h1M426 107h1M431 107h1M158 108h1M163 108h1M173 108h1M177 108h1M420 108h1M425 108h1M430 108h1M440 108h1M158 109h1M164 109h1M173 109h1M177 109h1M419 109h1M425 109h1M430 109h1M439 109h1M159 110h1M165 110h1M174 110h1M178 110h1M424 110h1M429 110h1M439 110h1M155 111h1M160 111h1M165 111h1M174 111h1M424 111h1M428 111h1M438 111h1M443 111h1M155 112h1M161 112h1M166 112h1M427 112h1M437 112h1M443 112h1M151 113h1M156 113h1M161 113h1M167 113h1M427 113h1M436 113h1M442 113h1M446 113h1M152 114h1M157 114h1M162 114h1M168 114h1M426 114h1M435 114h1M441 114h1M446 114h1M153 115h1M158 115h1M163 115h1M168 115h1M243 115h1M434 115h1M440 115h1M445 115h1M450 115h1M153 116h1M158 116h1M164 116h1M169 116h1M434 116h1M440 116h1M444 116h1M449 116h1M154 117h1M159 117h1M164 117h1M244 117h1M433 117h1M439 117h1M443 117h1M449 117h1M155 118h1M160 118h1M165 118h1M432 118h1M438 118h1M443 118h1M448 118h1M145 119h1M156 119h1M161 119h1M245 119h1M437 119h1M442 119h1M447 119h1M146 120h1M157 120h1M161 120h1M437 120h1M441 120h1M446 120h1M141 121h1M147 121h1M157 121h1M162 121h1M245 121h1M436 121h1M440 121h1M446 121h1M456 121h1M142 122h1M148 122h1M158 122h1M440 122h1M445 122h1M455 122h1M143 123h1M149 123h1M159 123h1M246 123h1M439 123h1M444 123h1M455 123h1M139 124h1M144 124h1M149 124h1M443 124h1M454 124h1M459 124h1M140 125h1M145 125h1M150 125h1M246 125h1M443 125h1M453 125h1M458 125h1M135 126h1M141 126h1M146 126h1M151 126h1M442 126h1M452 126h1M457 126h1M463 126h1M136 127h1M142 127h1M146 127h1M152 127h1M247 127h1M451 127h1M456 127h1M462 127h1M137 128h1M143 128h1M147 128h1M153 128h1M450 128h1M455 128h1M461 128h1M138 129h1M143 129h1M148 129h1M248 129h1M450 129h1M455 129h1M460 129h1M466 129h1M139 130h1M144 130h1M149 130h1M449 130h1M454 130h1M459 130h1M465 130h1M140 131h1M145 131h1M150 131h1M248 131h1M448 131h1M453 131h1M458 131h1M464 131h1M129 132h1M140 132h1M146 132h1M452 132h1M458 132h1M463 132h1M130 133h1M141 133h1M147 133h1M249 133h1M276 133h1M451 133h1M457 133h1M462 133h1M131 134h1M142 134h1M276 134h1M456 134h1M461 134h1M126 135h1M132 135h1M143 135h1M249 135h1M276 135h1M455 135h1M460 135h1M472 135h1M127 136h1M133 136h1M144 136h1M277 136h1M454 136h1M459 136h1M471 136h1M128 137h1M134 137h1M250 137h1M277 137h1M458 137h1M470 137h1M129 138h1M135 138h1M277 138h1M457 138h1M469 138h1M124 139h1M130 139h1M136 139h1M251 139h1M277 139h1M456 139h1M467 139h2M474 139h1M125 140h1M131 140h2M137 140h1M277 140h1M351 140h1M466 140h1M473 140h1M126 141h1M133 141h1M138 141h1M251 141h1M277 141h1M349 141h2M465 141h1M472 141h1M477 141h1M121 142h1M127 142h1M134 142h1M139 142h1M278 142h1M348 142h1M464 142h1M470 142h2M476 142h1M122 143h2M128 143h2M135 143h1M252 143h1M278 143h1M347 143h1M463 143h1M469 143h1M475 143h1M124 144h1M130 144h1M136 144h1M278 144h1M345 144h2M462 144h1M468 144h1M474 144h1M125 145h1M131 145h1M252 145h1M278 145h1M344 145h1M467 145h1M472 145h2M479 145h1M126 146h1M132 146h1M343 146h1M466 146h1M471 146h1M478 146h1M127 147h1M133 147h1M253 147h1M341 147h2M465 147h1M470 147h1M477 147h1M115 148h1M128 148h2M340 148h1M469 148h1M475 148h2M116 149h2M130 149h1M254 149h1M339 149h1M468 149h1M474 149h1M118 150h1M131 150h1M467 150h1M473 150h1M119 151h1M254 151h1M422 151h1M472 151h1M485 151h1M113 152h2M120 152h2M471 152h1M484 152h1M115 153h1M122 153h1M255 153h1M421 153h1M470 153h1M482 153h2M116 154h1M123 154h1M481 154h1M111 155h2M117 155h2M124 155h2M255 155h1M419 155h1M480 155h1M486 155h2M113 156h1M119 156h1M126 156h1M479 156h1M485 156h1M114 157h1M120 157h1M256 157h1M417 157h1M477 157h2M484 157h1M108 158h1M115 158h2M121 158h2M476 158h1M482 158h2M489 158h2M109 159h2M117 159h1M123 159h1M257 159h1M416 159h1M475 159h1M481 159h1M488 159h1M111 160h1M118 160h1M480 160h1M487 160h1M112 161h1M119 161h2M257 161h1M414 161h1M478 161h2M485 161h2M113 162h1M121 162h1M477 162h1M484 162h1M491 162h2M114 163h1M258 163h1M412 163h1M483 163h1M490 163h1M103 164h1M115 164h2M481 164h2M489 164h1M104 165h2M117 165h1M258 165h1M411 165h1M480 165h1M487 165h2M106 166h1M118 166h1M486 166h1M107 167h1M259 167h1M409 167h1M485 167h1M108 168h2M483 168h2M101 169h2M110 169h1M260 169h1M407 169h1M482 169h1M496 169h2M103 170h2M111 170h1M494 170h2M98 171h1M105 171h1M112 171h2M260 171h1M406 171h1M492 171h2M500 171h1M99 172h2M106 172h2M114 172h1M491 172h1M498 172h2M101 173h1M108 173h2M261 173h1M404 173h1M489 173h2M496 173h2M102 174h1M110 174h2M487 174h2M494 174h2M96 175h1M103 175h2M261 175h1M402 175h1M493 175h1M502 175h1M97 176h2M105 176h1M491 176h2M500 176h2M99 177h1M106 177h1M262 177h1M401 177h1M489 177h2M499 177h1M100 178h2M107 178h2M488 178h1M497 178h2M504 178h1M102 179h2M109 179h1M263 179h1M399 179h1M495 179h2M502 179h2M104 180h1M181 180h1M494 180h1M501 180h1M105 181h2M182 181h1M263 181h1M397 181h1M492 181h2M499 181h2M107 182h1M183 182h1M491 182h1M497 182h2M92 183h2M184 183h1M264 183h1M396 183h1M496 183h1M94 184h2M145 184h1M185 184h2M494 184h2M96 185h1M147 185h1M187 185h1M264 185h1M394 185h1M493 185h1M508 185h1M97 186h2M188 186h1M506 186h2M90 187h2M99 187h2M149 187h1M189 187h1M265 187h1M392 187h1M504 187h2M92 188h2M101 188h2M151 188h1M190 188h1M502 188h2M88 189h1M94 189h2M103 189h1M266 189h1M391 189h1M501 189h1M509 189h2M89 190h2M96 190h2M153 190h1M499 190h2M507 190h2M91 191h2M98 191h2M155 191h1M266 191h1M389 191h1M497 191h2M505 191h2M93 192h1M100 192h2M503 192h2M86 193h1M94 193h2M157 193h1M267 193h1M387 193h1M501 193h2M511 193h2M87 194h2M96 194h2M159 194h1M499 194h2M509 194h2M89 195h2M98 195h2M268 195h1M386 195h1M498 195h1M507 195h2M91 196h2M161 196h1M505 196h2M93 197h2M163 197h1M268 197h1M384 197h1M503 197h2M513 197h2M95 198h2M501 198h2M511 198h2M97 199h2M165 199h1M269 199h1M382 199h1M500 199h1M508 199h3M167 200h1M506 200h2M83 201h2M269 201h1M381 201h1M504 201h2M85 202h2M169 202h1M502 202h2M87 203h2M171 203h1M270 203h1M379 203h1M81 204h1M89 204h2M517 204h1M82 205h2M91 205h2M173 205h1M271 205h1M377 205h1M515 205h2M84 206h2M93 206h2M175 206h1M513 206h2M86 207h2M271 207h1M376 207h1M511 207h2M79 208h2M88 208h2M177 208h1M509 208h2M518 208h2M81 209h2M90 209h2M179 209h1M272 209h1M374 209h1M507 209h2M516 209h2M83 210h2M92 210h1M506 210h1M513 210h3M85 211h3M181 211h1M272 211h1M372 211h1M511 211h2M77 212h2M88 212h2M183 212h1M509 212h2M520 212h2M79 213h2M90 213h2M273 213h1M371 213h1M507 213h2M518 213h2M81 214h3M185 214h1M473 214h1M515 214h3M84 215h3M187 215h1M274 215h1M369 215h1M471 215h1M512 215h3M87 216h2M469 216h1M510 216h2M521 216h2M89 217h1M189 217h1M274 217h1M367 217h1M467 217h1M509 217h1M519 217h2M191 218h1M465 218h1M516 218h3M275 219h1M366 219h1M463 219h1M514 219h2M74 220h2M193 220h1M461 220h1M512 220h2M76 221h3M195 221h1M275 221h1M364 221h1M459 221h1M510 221h2M79 222h4M457 222h1M83 223h3M197 223h1M276 223h1M362 223h1M455 223h1M73 224h2M86 224h2M199 224h1M453 224h1M524 224h2M75 225h3M277 225h1M361 225h1M451 225h1M521 225h3M78 226h4M201 226h1M449 226h1M517 226h4M82 227h3M203 227h1M277 227h1M359 227h1M447 227h1M514 227h3M72 228h2M85 228h2M445 228h1M512 228h2M525 228h2M74 229h3M205 229h1M278 229h1M357 229h1M443 229h1M522 229h3M77 230h4M207 230h1M441 230h1M518 230h4M81 231h3M278 231h1M439 231h1M515 231h3M70 232h2M84 232h1M209 232h1M437 232h1M514 232h1M526 232h3M72 233h3M211 233h1M279 233h1M354 233h1M435 233h1M522 233h4M75 234h4M433 234h1M518 234h4M79 235h3M213 235h1M280 235h1M352 235h1M429 235h1M431 235h1M515 235h3M82 236h2M215 236h1M427 236h1M527 236h3M280 237h1M351 237h1M425 237h1M523 237h4M217 238h1M423 238h1M519 238h4M219 239h1M281 239h1M349 239h1M421 239h1M516 239h3M68 240h3M419 240h1M71 241h4M221 241h1M281 241h1M347 241h1M417 241h1M75 242h4M223 242h1M415 242h1M79 243h3M282 243h1M346 243h1M413 243h1M67 244h3M225 244h1M411 244h1M529 244h3M70 245h4M227 245h1M283 245h1M344 245h1M409 245h1M525 245h4M74 246h4M407 246h1M521 246h4M78 247h3M229 247h1M283 247h1M342 247h1M405 247h1M518 247h3M66 248h3M231 248h1M403 248h1M530 248h3M69 249h4M284 249h1M341 249h1M401 249h1M525 249h5M73 250h5M233 250h1M399 250h1M521 250h4M78 251h2M235 251h1M284 251h1M339 251h1M397 251h1M519 251h2M66 252h2M395 252h1M531 252h2M68 253h4M237 253h1M285 253h1M337 253h1M393 253h1M526 253h5M72 254h5M239 254h1M391 254h1M522 254h4M77 255h2M286 255h1M336 255h1M389 255h1M520 255h2M241 256h1M387 256h1M530 256h4M243 257h1M286 257h1M334 257h1M385 257h1M524 257h6M383 258h1M520 258h4M245 259h1M287 259h1M332 259h1M381 259h1M64 260h4M247 260h1M379 260h1M68 261h6M287 261h1M331 261h1M377 261h1M74 262h4M249 262h1M375 262h1M251 263h1M288 263h1M329 263h1M373 263h1M63 264h4M371 264h1M532 264h4M67 265h7M253 265h1M289 265h1M327 265h1M369 265h1M525 265h7M74 266h3M255 266h1M367 266h1M522 266h3M289 267h1M326 267h1M365 267h1M63 268h4M257 268h1M363 268h1M532 268h4M67 269h6M259 269h1M290 269h1M324 269h1M361 269h1M526 269h6M73 270h4M359 270h1M522 270h4M261 271h1M291 271h1M322 271h1M357 271h1M263 272h1M355 272h1M533 272h4M62 273h7M291 273h1M321 273h1M353 273h1M526 273h7M69 274h7M265 274h1M351 274h1M523 274h3M267 275h1M292 275h1M319 275h1M349 275h1M347 276h1M269 277h1M292 277h1M317 277h1M345 277h1M530 277h7M271 278h1M341 278h1M343 278h1M523 278h7M293 279h1M316 279h1M339 279h1M273 280h1M337 280h1M62 281h6M275 281h1M294 281h1M314 281h1M335 281h1M68 282h8M333 282h1M277 283h1M294 283h1M312 283h1M331 283h1M279 284h1M329 284h1M62 285h6M295 285h1M311 285h1M327 285h1M530 285h7M68 286h8M281 286h1M325 286h1M523 286h7M283 287h1M295 287h1M309 287h1M323 287h1M321 288h1M61 289h7M285 289h1M296 289h1M307 289h1M319 289h1M531 289h7M68 290h7M287 290h1M317 290h1M524 290h7M297 291h1M306 291h1M315 291h1M289 292h1M313 292h1M61 293h7M291 293h1M297 293h1M304 293h1M311 293h1M531 293h7M68 294h7M309 294h1M524 294h7M293 295h1M298 295h1M302 295h1M307 295h1M305 296h1M298 297h1M301 297h1M303 297h1M524 297h14M297 298h1M301 298h1M299 299h1M297 300h1M301 300h1M61 301h14M295 301h1M297 301h1M300 301h1M293 302h1M303 302h1M291 303h1M296 303h1M300 303h1M305 303h1M68 304h7M289 304h1M524 304h7M61 305h7M287 305h1M294 305h1M301 305h1M307 305h1M531 305h7M285 306h1M283 307h1M292 307h1M301 307h1M68 308h7M281 308h1M311 308h1M524 308h7M61 309h7M279 309h1M291 309h1M302 309h1M313 309h1M531 309h7M277 310h1M275 311h1M289 311h1M303 311h1M315 311h1M68 312h8M273 312h1M317 312h1M523 312h7M62 313h6M271 313h1M287 313h1M303 313h1M530 313h7M269 314h1M319 314h1M267 315h1M286 315h1M304 315h1M321 315h1M265 316h1M523 316h7M263 317h1M284 317h1M304 317h1M323 317h1M530 317h7M261 318h1M325 318h1M259 319h1M282 319h1M305 319h1M69 320h7M255 320h1M257 320h1M327 320h1M62 321h7M253 321h1M281 321h1M306 321h1M329 321h1M251 322h1M249 323h1M279 323h1M306 323h1M331 323h1M73 324h3M247 324h1M333 324h1M523 324h6M66 325h7M245 325h1M277 325h1M307 325h1M529 325h8M62 326h4M243 326h1M335 326h1M241 327h1M276 327h1M307 327h1M337 327h1M73 328h4M239 328h1M522 328h4M67 329h6M237 329h1M274 329h1M308 329h1M339 329h1M526 329h6M63 330h4M235 330h1M341 330h1M532 330h4M233 331h1M272 331h1M309 331h1M74 332h3M231 332h1M343 332h1M522 332h3M67 333h7M229 333h1M271 333h1M309 333h1M345 333h1M525 333h7M64 334h3M227 334h1M532 334h3M225 335h1M269 335h1M310 335h1M347 335h1M223 336h1M349 336h1M521 336h4M221 337h1M267 337h1M311 337h1M525 337h6M219 338h1M351 338h1M531 338h3M217 339h1M266 339h1M311 339h1M353 339h1M75 340h4M215 340h1M69 341h6M213 341h1M264 341h1M312 341h1M355 341h1M65 342h4M211 342h1M357 342h1M77 343h3M209 343h1M262 343h1M312 343h1M519 343h3M72 344h5M207 344h1M359 344h1M522 344h4M68 345h4M205 345h1M261 345h1M313 345h1M361 345h1M526 345h5M66 346h2M203 346h1M531 346h2M78 347h3M201 347h1M259 347h1M314 347h1M363 347h1M518 347h3M73 348h5M199 348h1M365 348h1M521 348h4M69 349h4M197 349h1M257 349h1M314 349h1M525 349h5M67 350h2M195 350h1M367 350h1M530 350h2M78 351h3M193 351h1M256 351h1M315 351h1M369 351h1M518 351h3M74 352h4M191 352h1M521 352h4M70 353h4M189 353h1M254 353h1M315 353h1M371 353h1M525 353h4M68 354h2M187 354h1M373 354h1M529 354h2M185 355h1M252 355h1M316 355h1M517 355h3M183 356h1M375 356h1M520 356h4M181 357h1M251 357h1M317 357h1M377 357h1M524 357h4M179 358h1M528 358h3M80 359h3M177 359h1M249 359h1M317 359h1M379 359h1M76 360h4M175 360h1M381 360h1M72 361h4M173 361h1M247 361h1M318 361h1M69 362h3M171 362h1M383 362h1M515 362h2M81 363h3M167 363h1M169 363h1M246 363h1M318 363h1M385 363h1M517 363h3M77 364h4M165 364h1M520 364h4M73 365h4M163 365h1M244 365h1M319 365h1M387 365h1M524 365h3M70 366h3M84 366h2M161 366h1M389 366h1M513 366h2M527 366h2M81 367h3M159 367h1M242 367h1M320 367h1M515 367h3M77 368h4M157 368h1M391 368h1M518 368h4M74 369h3M155 369h1M241 369h1M320 369h1M393 369h1M522 369h3M72 370h2M85 370h2M153 370h1M512 370h2M525 370h2M82 371h3M151 371h1M239 371h1M321 371h1M395 371h1M514 371h3M78 372h4M149 372h1M397 372h1M517 372h4M75 373h3M147 373h1M237 373h1M321 373h1M521 373h3M73 374h2M145 374h1M399 374h1M511 374h2M524 374h2M143 375h1M236 375h1M322 375h1M401 375h1M513 375h3M141 376h1M516 376h4M87 377h2M139 377h1M234 377h1M323 377h1M520 377h3M85 378h2M137 378h1M405 378h1M523 378h2M82 379h3M135 379h1M232 379h1M323 379h1M80 380h2M133 380h1M407 380h1M78 381h2M89 381h2M131 381h1M231 381h1M324 381h1M409 381h1M508 381h2M76 382h2M87 382h2M129 382h1M510 382h2M84 383h3M127 383h1M229 383h1M324 383h1M411 383h1M512 383h3M81 384h3M125 384h1M413 384h1M515 384h3M79 385h2M90 385h2M227 385h1M325 385h1M507 385h2M518 385h2M77 386h2M88 386h2M415 386h1M509 386h2M520 386h2M85 387h3M226 387h1M326 387h1M417 387h1M511 387h2M83 388h2M92 388h1M506 388h1M513 388h3M81 389h2M90 389h2M224 389h1M326 389h1M419 389h1M507 389h2M516 389h2M79 390h2M88 390h2M421 390h1M509 390h2M518 390h2M86 391h2M222 391h1M327 391h1M511 391h2M84 392h2M423 392h1M504 392h1M513 392h2M82 393h2M221 393h1M327 393h1M425 393h1M505 393h2M515 393h2M81 394h1M507 394h2M517 394h1M219 395h1M328 395h1M427 395h1M509 395h2M95 396h2M429 396h1M511 396h2M93 397h2M217 397h1M329 397h1M513 397h2M90 398h3M431 398h1M515 398h1M88 399h2M97 399h2M216 399h1M329 399h1M433 399h1M500 399h1M86 400h2M95 400h2M501 400h2M84 401h2M93 401h2M214 401h1M330 401h1M435 401h1M503 401h2M91 402h2M437 402h1M505 402h2M89 403h2M99 403h2M212 403h1M330 403h1M499 403h2M507 403h2M87 404h2M97 404h2M439 404h1M501 404h2M509 404h2M86 405h1M95 405h2M211 405h1M331 405h1M441 405h1M503 405h1M511 405h2M93 406h2M497 406h1M504 406h2M91 407h2M100 407h2M209 407h1M332 407h1M443 407h1M498 407h2M506 407h2M89 408h2M98 408h2M500 408h2M508 408h2M88 409h1M96 409h2M207 409h1M332 409h1M495 409h1M502 409h2M510 409h1M95 410h1M447 410h1M496 410h2M504 410h2M93 411h2M206 411h1M333 411h1M449 411h1M498 411h2M506 411h2M91 412h2M500 412h1M508 412h1M90 413h1M105 413h1M204 413h1M334 413h1M451 413h1M501 413h2M103 414h2M453 414h1M503 414h2M102 415h1M202 415h1M334 415h1M505 415h2M100 416h2M107 416h1M491 416h1M98 417h2M105 417h2M201 417h1M335 417h1M492 417h2M97 418h1M104 418h1M494 418h1M95 419h2M102 419h2M199 419h1M335 419h1M489 419h1M495 419h2M94 420h1M100 420h2M110 420h1M490 420h2M497 420h2M99 421h1M108 421h2M197 421h1M336 421h1M492 421h1M499 421h1M97 422h2M106 422h2M493 422h1M500 422h2M96 423h1M104 423h2M196 423h1M337 423h1M494 423h2M502 423h1M103 424h1M110 424h2M487 424h2M496 424h1M101 425h2M108 425h2M194 425h1M337 425h1M489 425h2M497 425h1M99 426h2M106 426h2M484 426h1M491 426h1M498 426h2M98 427h1M105 427h1M192 427h1M338 427h1M485 427h2M492 427h2M500 427h1M103 428h2M487 428h1M494 428h2M101 429h2M116 429h1M191 429h1M338 429h1M488 429h1M496 429h2M114 430h2M489 430h2M113 431h1M189 431h1M339 431h1M491 431h1M112 432h1M480 432h1M492 432h1M110 433h2M118 433h1M187 433h1M340 433h1M481 433h1M493 433h2M109 434h1M116 434h2M482 434h2M495 434h1M108 435h1M115 435h1M186 435h1M340 435h1M484 435h1M106 436h2M114 436h1M121 436h1M477 436h1M485 436h1M112 437h2M119 437h2M184 437h1M341 437h1M478 437h2M486 437h1M111 438h1M118 438h1M480 438h1M487 438h1M110 439h1M117 439h1M123 439h1M182 439h1M341 439h1M475 439h1M481 439h1M488 439h2M108 440h2M115 440h2M122 440h1M476 440h2M482 440h2M490 440h1M114 441h1M120 441h2M181 441h1M342 441h1M478 441h1M484 441h1M113 442h1M119 442h1M472 442h1M479 442h1M485 442h1M111 443h2M118 443h1M179 443h1M343 443h1M473 443h2M480 443h2M486 443h2M117 444h1M475 444h1M482 444h1M115 445h2M128 445h1M177 445h1M343 445h1M476 445h1M483 445h1M114 446h1M127 446h1M477 446h2M484 446h2M113 447h1M126 447h1M176 447h1M344 447h1M479 447h1M125 448h1M131 448h1M467 448h1M480 448h1M123 449h2M130 449h1M344 449h1M468 449h1M481 449h2M122 450h1M129 450h1M469 450h2M483 450h1M121 451h1M128 451h1M133 451h1M345 451h1M465 451h1M471 451h1M120 452h1M126 452h2M132 452h1M466 452h1M472 452h1M119 453h1M125 453h1M131 453h1M346 453h1M467 453h1M473 453h1M124 454h1M130 454h1M136 454h1M462 454h1M468 454h1M474 454h1M123 455h1M128 455h2M135 455h1M346 455h1M463 455h1M469 455h1M475 455h2M122 456h1M127 456h1M134 456h1M459 456h1M464 456h1M470 456h2M477 456h1M121 457h1M126 457h1M133 457h1M347 457h1M460 457h1M465 457h1M472 457h1M125 458h1M131 458h2M461 458h1M466 458h1M473 458h1M124 459h1M130 459h1M142 459h1M347 459h1M462 459h1M467 459h2M474 459h1M129 460h1M141 460h1M463 460h1M469 460h1M128 461h1M140 461h1M348 461h1M464 461h1M470 461h1M127 462h1M139 462h1M144 462h1M454 462h1M465 462h1M471 462h1M126 463h1M138 463h1M143 463h1M349 463h1M455 463h1M466 463h1M472 463h1M137 464h1M142 464h1M456 464h1M467 464h1M136 465h1M141 465h1M147 465h1M349 465h1M451 465h1M457 465h1M468 465h1M135 466h1M140 466h1M146 466h1M452 466h1M458 466h1M469 466h1M134 467h1M139 467h1M145 467h1M150 467h1M350 467h1M448 467h1M453 467h1M459 467h1M133 468h1M139 468h1M144 468h1M149 468h1M449 468h1M454 468h1M459 468h1M132 469h1M138 469h1M143 469h1M148 469h1M350 469h1M450 469h1M455 469h1M460 469h1M137 470h1M142 470h1M148 470h1M445 470h1M451 470h1M456 470h1M461 470h1M136 471h1M142 471h1M147 471h1M351 471h1M446 471h1M452 471h1M456 471h1M462 471h1M135 472h1M141 472h1M146 472h1M156 472h1M447 472h1M453 472h1M457 472h1M463 472h1M140 473h1M145 473h1M155 473h1M448 473h1M453 473h1M458 473h1M139 474h1M144 474h1M155 474h1M449 474h1M454 474h1M459 474h1M143 475h1M154 475h1M159 475h1M439 475h1M450 475h1M455 475h1M143 476h1M153 476h1M158 476h1M440 476h1M450 476h1M456 476h1M142 477h1M152 477h1M158 477h1M162 477h1M353 477h1M436 477h1M441 477h1M451 477h1M457 477h1M152 478h1M157 478h1M161 478h1M437 478h1M441 478h1M452 478h1M151 479h1M156 479h1M161 479h1M353 479h1M437 479h1M442 479h1M453 479h1M150 480h1M155 480h1M160 480h1M166 480h1M433 480h1M438 480h1M443 480h1M149 481h1M155 481h1M159 481h1M165 481h1M354 481h1M434 481h1M439 481h1M444 481h1M149 482h1M154 482h1M158 482h1M164 482h1M429 482h1M434 482h1M440 482h1M445 482h1M148 483h1M153 483h1M158 483h1M164 483h1M355 483h1M430 483h1M435 483h1M440 483h1M445 483h1M152 484h1M157 484h1M163 484h1M172 484h1M430 484h1M436 484h1M441 484h1M446 484h1M152 485h1M156 485h1M162 485h1M171 485h1M431 485h1M437 485h1M442 485h1M447 485h1M155 486h1M161 486h1M171 486h1M432 486h1M437 486h1M443 486h1M155 487h1M160 487h1M170 487h1M174 487h1M424 487h1M433 487h1M438 487h1M443 487h1M159 488h1M169 488h1M174 488h1M420 488h1M424 488h1M433 488h1M439 488h1M159 489h1M168 489h1M173 489h1M179 489h1M421 489h1M425 489h1M434 489h1M440 489h1M158 490h1M168 490h1M173 490h1M178 490h1M421 490h1M425 490h1M435 490h1M440 490h1M167 491h1M172 491h1M178 491h1M182 491h1M416 491h1M422 491h1M426 491h1M436 491h1M166 492h1M171 492h1M177 492h1M181 492h1M417 492h1M422 492h1M427 492h1M436 492h1M165 493h1M171 493h1M176 493h1M181 493h1M413 493h1M417 493h1M423 493h1M427 493h1M165 494h1M170 494h1M175 494h1M180 494h1M414 494h1M418 494h1M424 494h1M428 494h1M164 495h1M170 495h1M175 495h1M179 495h1M189 495h1M414 495h1M419 495h1M424 495h1M428 495h1M169 496h1M174 496h1M179 496h1M188 496h1M415 496h1M419 496h1M425 496h1M429 496h1M169 497h1M173 497h1M178 497h1M188 497h1M192 497h1M407 497h1M416 497h1M420 497h1M425 497h1M429 497h1M172 498h1M178 498h1M187 498h1M191 498h1M403 498h1M407 498h1M416 498h1M420 498h1M426 498h1M172 499h1M177 499h1M187 499h1M191 499h1M195 499h1M404 499h1M408 499h1M417 499h1M421 499h1M426 499h1M171 500h1M176 500h1M186 500h1M190 500h1M195 500h1M199 500h1M399 500h1M404 500h1M408 500h1M417 500h1M422 500h1M427 500h1M176 501h1M185 501h1M190 501h1M194 501h1M198 501h1M400 501h1M405 501h1M409 501h1M418 501h1M422 501h1M175 502h1M185 502h1M189 502h1M194 502h1M198 502h1M396 502h1M400 502h1M405 502h1M410 502h1M419 502h1M423 502h1M184 503h1M189 503h1M193 503h1M197 503h1M396 503h1M401 503h1M406 503h1M410 503h1M419 503h1M184 504h1M188 504h1M192 504h1M197 504h1M206 504h1M397 504h1M401 504h1M406 504h1M411 504h1M420 504h1M183 505h1M188 505h1M192 505h1M196 505h1M205 505h1M397 505h1M402 505h1M407 505h1M411 505h1M183 506h1M187 506h1M191 506h1M196 506h1M205 506h1M210 506h1M388 506h1M398 506h1M402 506h1M407 506h1M412 506h1M187 507h1M191 507h1M195 507h1M204 507h1M209 507h1M213 507h1M385 507h1M389 507h1M398 507h1M403 507h1M408 507h1M412 507h1M186 508h1M190 508h1M195 508h1M204 508h1M209 508h1M213 508h1M381 508h1M385 508h1M389 508h1M399 508h1M403 508h1M408 508h1M413 508h1M190 509h1M194 509h1M203 509h1M208 509h1M212 509h1M217 509h1M381 509h1M386 509h1M390 509h1M399 509h1M404 509h1M409 509h1M189 510h1M194 510h1M203 510h1M208 510h1M212 510h1M216 510h1M377 510h1M382 510h1M386 510h1M390 510h1M399 510h1M404 510h1M409 510h1M193 511h1M202 511h1M207 511h1M211 511h1M216 511h1M224 511h1M377 511h1M382 511h1M387 511h1M391 511h1M400 511h1M405 511h1M193 512h1M202 512h1M207 512h1M211 512h1M215 512h1M224 512h1M228 512h1M370 512h1M378 512h1M383 512h1M387 512h1M391 512h1M400 512h1M405 512h1M201 513h1M206 513h1M210 513h1M215 513h1M223 513h1M228 513h1M366 513h1M370 513h1M378 513h1M383 513h1M388 513h1M392 513h1M401 513h1M201 514h1M206 514h1M210 514h1M215 514h1M223 514h1M227 514h1M232 514h1M366 514h1M371 514h1M379 514h1M383 514h1M388 514h1M392 514h1M401 514h1M200 515h1M205 515h1M210 515h1M214 515h1M223 515h1M227 515h1M231 515h1M236 515h1M363 515h1M367 515h1M371 515h1M379 515h1M384 515h1M388 515h1M393 515h1M205 516h1M209 516h1M214 516h1M222 516h1M227 516h1M231 516h1M236 516h1M359 516h1M363 516h1M367 516h1M371 516h1M380 516h1M384 516h1M389 516h1M393 516h1M204 517h1M209 517h1M214 517h1M222 517h1M226 517h1M231 517h1M235 517h1M243 517h1M359 517h1M363 517h1M367 517h1M372 517h1M380 517h1M384 517h1M389 517h1M394 517h1M208 518h1M213 518h1M222 518h1M226 518h1M230 518h1M235 518h1M243 518h1M247 518h1M347 518h1M351 518h1M359 518h1M364 518h1M368 518h1M372 518h1M380 518h1M385 518h1M390 518h1M208 519h1M213 519h1M222 519h1M226 519h1M230 519h1M235 519h1M243 519h1M247 519h1M251 519h1M343 519h1M347 519h1M351 519h1M360 519h1M364 519h1M368 519h1M372 519h1M381 519h1M385 519h1M390 519h1M212 520h1M221 520h1M226 520h1M230 520h1M234 520h1M242 520h1M247 520h1M251 520h1M255 520h1M340 520h1M343 520h1M347 520h1M351 520h1M360 520h1M364 520h1M368 520h1M372 520h1M381 520h1M386 520h1M212 521h1M221 521h1M225 521h1M230 521h1M234 521h1M242 521h1M246 521h1M250 521h1M255 521h1M262 521h1M340 521h1M343 521h1M348 521h1M352 521h1M360 521h1M364 521h1M368 521h1M373 521h1M382 521h1M386 521h1M221 522h1M225 522h1M229 522h1M234 522h1M242 522h1M246 522h1M250 522h1M254 522h1M262 522h1M266 522h1M270 522h1M328 522h1M332 522h1M340 522h1M344 522h1M348 522h1M352 522h1M360 522h1M365 522h1M369 522h1M373 522h1M382 522h1M220 523h1M225 523h1M229 523h1M234 523h1M242 523h1M246 523h1M250 523h1M254 523h1M262 523h1M266 523h1M270 523h1M274 523h1M282 523h1M286 523h1M312 523h1M320 523h1M324 523h1M328 523h1M332 523h1M340 523h1M344 523h1M348 523h1M352 523h1M361 523h1M365 523h1M369 523h1M373 523h1M220 524h1M224 524h1M229 524h1M233 524h1M241 524h1M246 524h1M250 524h1M254 524h1M262 524h1M266 524h1M270 524h1M274 524h1M282 524h1M286 524h1M290 524h1M294 524h1M301 524h1M304 524h1M308 524h1M312 524h1M320 524h1M324 524h1M328 524h1M332 524h1M341 524h1M344 524h1M348 524h1M352 524h1M361 524h1M365 524h1M369 524h1M374 524h1M224 525h1M228 525h1M233 525h1M241 525h1M245 525h1M249 525h1M254 525h1M261 525h1M265 525h1M270 525h1M274 525h1M282 525h1M286 525h1M290 525h1M294 525h1M301 525h1M304 525h1M308 525h1M312 525h1M320 525h1M324 525h1M328 525h1M333 525h1M341 525h1M344 525h1M349 525h1M353 525h1M361 525h1M365 525h1M370 525h1M374 525h1M228 526h1M233 526h1M241 526h1M245 526h1M249 526h1M253 526h1M261 526h1M265 526h1M269 526h1M274 526h1M282 526h1M286 526h1M290 526h1M294 526h1M301 526h1M304 526h1M308 526h1M312 526h1M320 526h1M325 526h1M329 526h1M333 526h1M341 526h1M345 526h1M349 526h1M353 526h1M361 526h1M366 526h1M370 526h1M232 527h1M241 527h1M245 527h1M249 527h1M253 527h1M261 527h1M265 527h1M269 527h1M274 527h1M282 527h1M286 527h1M290 527h1M294 527h1M301 527h1M304 527h1M308 527h1M312 527h1M320 527h1M325 527h1M329 527h1M333 527h1M341 527h1M345 527h1M349 527h1M353 527h1M362 527h1M366 527h1M232 528h1M240 528h1M245 528h1M249 528h1M253 528h1M261 528h1M265 528h1M269 528h1M274 528h1M282 528h1M286 528h1M290 528h1M294 528h1M301 528h1M304 528h1M308 528h1M312 528h1M320 528h1M325 528h1M329 528h1M333 528h1M341 528h1M345 528h1M349 528h1M353 528h1M362 528h1M366 528h1M240 529h1M244 529h1M249 529h1M253 529h1M261 529h1M265 529h1M269 529h1M273 529h1M282 529h1M286 529h1M290 529h1M294 529h1M301 529h1M304 529h1M308 529h1M312 529h1M320 529h1M325 529h1M329 529h1M333 529h1M341 529h1M345 529h1M349 529h1M354 529h1M362 529h1M240 530h1M244 530h1M248 530h1M253 530h1M261 530h1M265 530h1M269 530h1M273 530h1M281 530h1M285 530h1M290 530h1M294 530h1M301 530h1M304 530h1M308 530h1M313 530h1M321 530h1M325 530h1M329 530h1M333 530h1M342 530h1M345 530h1M350 530h1M354 530h1M244 531h1M248 531h1M252 531h1M260 531h1M265 531h1M269 531h1M273 531h1M281 531h1M285 531h1M289 531h1M293 531h1M301 531h1M305 531h1M309 531h1M313 531h1M321 531h1M325 531h1M329 531h1M333 531h1M342 531h1M346 531h1M350 531h1M248 532h1M252 532h1M260 532h1M264 532h1M268 532h1M273 532h1M281 532h1M285 532h1M289 532h1M293 532h1M301 532h1M305 532h1M309 532h1M313 532h1M321 532h1M325 532h1M330 532h1M334 532h1M342 532h1M346 532h1M260 533h1M264 533h1M268 533h1M273 533h1M281 533h1M285 533h1M289 533h1M293 533h1M301 533h1M305 533h1M309 533h1M313 533h1M321 533h1M326 533h1M330 533h1M334 533h1M342 533h1M260 534h1M264 534h1M268 534h1M273 534h1M281 534h1M285 534h1M289 534h1M293 534h1M301 534h1M305 534h1M309 534h1M313 534h1M321 534h1M326 534h1M330 534h1M334 534h1M264 535h1M268 535h1M273 535h1M281 535h1M285 535h1M289 535h1M293 535h1M301 535h1M305 535h1M309 535h1M313 535h1M321 535h1M326 535h1M330 535h1M273 536h1M281 536h1M285 536h1M289 536h1M293 536h1M301 536h1M305 536h1M309 536h1M313 536h1M321 536h1M326 536h1M289 537h1M293 537h1M301 537h1M305 537h1M309 537h1"/>
<path stroke="#ff0000" d="M109 104h3M119 104h3M108 105h1M112 105h1M118 105h1M122 105h1M107 106h1M113 106h1M117 106h1M123 106h1M745 106h1M752 106h1M107 107h1M113 107h1M117 107h1M123 107h1M746 107h6M107 108h1M113 108h1M117 108h1M123 108h1M747 108h1M750 108h1M108 109h1M113 109h1M117 109h1M122 109h1M747 109h1M750 109h1M109 110h1M113 110h1M117 110h1M121 110h1M747 110h1M750 110h1M114 111h1M116 111h1M747 111h1M750 111h1M115 112h1M747 112h1M750 112h1M115 113h1M746 113h6M115 114h1M745 114h1M752 114h1M115 115h1M115 116h1M115 117h1M115 118h1M115 119h1M115 120h1M744 146h1M746 146h1M748 146h1M745 147h1M747 147h1M749 147h1M751 147h1M745 148h1M747 148h1M749 148h3M745 149h1M747 149h1M749 149h1M751 149h1M745 150h1M747 150h1M749 150h1M751 150h1M745 151h1M747 151h1M749 151h1M751 151h1M745 152h1M747 152h1M749 152h1M751 152h1M745 153h1M747 153h1M750 153h1M749 154h1M751 154h1M332 160h1M336 160h1M330 161h1M334 161h1M328 162h1M332 163h1M326 164h1M330 164h1M324 165h1M328 165h1M322 166h1M326 166h1M320 167h1M324 168h1M318 169h1M322 169h1M316 170h1M320 170h1M314 171h1M318 171h1M312 173h1M316 173h1M310 174h1M314 174h1M308 175h1M312 175h1M306 176h1M310 176h1M304 178h1M308 178h1M302 179h1M306 179h1M300 180h1M304 180h1M302 181h1M298 182h1M296 183h1M300 183h1M294 184h1M298 184h1M292 185h1M296 185h1M294 186h1M745 186h1M748 186h1M750 186h2M290 187h1M744 187h2M748 187h2M752 187h1M288 188h1M292 188h1M745 188h1M747 188h1M749 188h1M752 188h1M286 189h1M290 189h1M745 189h1M747 189h1M750 189h2M288 190h1M745 190h1M747 190h1M751 190h1M284 191h1M286 191h1M746 191h1M752 191h1M282 192h1M746 192h1M752 192h1M280 193h1M284 193h1M746 193h1M752 193h1M282 194h1M751 194h1M278 195h1M280 195h1M276 196h1M278 196h1M274 197h1M272 198h1M276 198h1M274 199h1M270 200h1M272 200h1M268 201h1M266 202h1M270 202h1M268 203h1M264 204h1M266 204h1M262 205h1M264 205h1M260 206h1M258 207h1M262 207h1M260 208h1M256 209h1M258 209h1M254 210h1M256 210h1M252 211h1M254 212h1M250 213h1M252 213h1M248 214h1M250 214h1M246 215h1M248 215h1M244 216h1M246 217h1M242 218h1M244 218h1M240 219h1M242 219h1M238 220h1M240 220h1M236 222h1M238 222h1M234 223h1M236 223h1M232 224h1M234 224h1M232 225h1M230 226h1M557 226h5M228 227h1M230 227h1M560 227h2M226 228h1M228 228h1M559 228h1M561 228h1M224 229h1M226 229h1M558 229h1M561 229h1M224 230h1M557 230h1M561 230h1M222 231h1M556 231h1M220 232h1M222 232h1M547 232h1M555 232h1M218 233h1M220 233h1M548 233h1M554 233h1M218 234h1M549 234h1M553 234h1M216 235h1M550 235h1M552 235h1M214 236h1M216 236h1M551 236h1M747 236h3M212 237h1M214 237h1M550 237h1M552 237h1M745 237h2M750 237h2M210 238h1M212 238h1M549 238h1M553 238h1M745 238h1M751 238h1M210 239h1M548 239h1M554 239h1M744 239h1M752 239h1M208 240h1M547 240h1M555 240h1M744 240h1M748 240h1M752 240h1M206 241h1M208 241h1M546 241h1M744 241h1M752 241h1M204 242h1M206 242h1M545 242h1M745 242h1M751 242h1M204 243h1M745 243h2M750 243h2M202 244h1M747 244h3M200 245h1M198 246h1M200 246h1M196 247h1M198 247h1M196 248h1M194 249h1M192 250h1M431 250h1M190 251h1M192 251h1M190 252h1M188 253h1M186 254h1M429 254h1M184 255h1M184 256h1M126 257h6M182 257h1M130 258h2M180 258h1M427 258h1M129 259h1M131 259h1M178 259h1M128 260h1M131 260h1M176 260h1M127 261h1M131 261h1M176 261h1M126 262h1M131 262h1M174 262h1M425 262h1M118 263h5M125 263h1M172 263h1M117 264h1M123 264h2M170 264h1M116 265h1M124 265h1M115 266h1M125 266h1M168 266h1M423 266h1M115 267h1M125 267h1M166 267h1M115 268h1M125 268h1M164 268h1M115 269h1M125 269h1M162 269h1M115 270h1M125 270h1M421 270h1M116 271h1M124 271h1M152 271h1M160 271h1M117 272h1M123 272h1M118 273h5M419 274h1M750 276h3M751 277h2M417 278h1M750 278h1M752 278h1M746 279h2M749 279h1M745 280h1M748 280h1M744 281h1M749 281h1M415 282h1M744 282h1M749 282h1M745 283h1M748 283h1M746 284h2M413 286h1M751 286h1M745 287h2M750 287h1M747 288h1M750 288h1M747 289h1M750 289h1M411 290h1M746 290h1M750 290h1M746 291h1M750 291h1M745 292h1M750 292h1M745 293h8M409 294h1M750 294h1M407 298h1M149 299h1M155 299h1M158 302h1M405 302h1M161 305h1M403 306h1M164 307h1M167 310h1M401 310h1M170 313h1M399 314h1M173 316h1M176 318h1M397 318h1M179 321h1M395 322h1M182 324h1M392 326h1M185 327h1M188 329h1M390 330h1M191 332h1M388 334h1M194 335h1M197 338h1M386 338h1M200 340h1M384 342h1M203 343h1M206 346h1M382 346h1M209 349h1M380 350h1M212 351h1M215 354h1M378 354h1M218 357h1M376 358h1M221 360h1M224 362h1M374 362h1M227 365h1M372 366h1M230 368h1M370 370h1M233 371h1M236 373h1M368 374h1M239 376h1M366 378h1M242 379h1M245 382h1M364 382h1M248 384h1M362 386h1M251 387h1M254 390h1M360 390h1M257 393h1M358 394h1M260 395h1M412 396h1M263 398h1M356 398h1M266 401h1M353 402h1M269 404h1M272 406h1M351 406h1M275 409h1M349 410h1M439 411h1M278 412h1M438 412h1M428 413h2M437 413h1M347 414h1M430 414h1M437 414h1M281 415h1M431 415h1M437 415h1M431 416h1M437 416h1M284 417h1M431 417h1M437 417h1M345 418h1M430 418h1M437 418h1M430 419h1M437 419h1M287 420h1M429 420h1M437 420h1M429 421h1M437 421h1M343 422h1M428 422h1M437 422h1M290 423h1M428 423h1M437 423h1M427 424h1M437 424h1M427 425h15M293 426h1M341 426h1M437 426h1M437 427h1M296 428h1M339 430h1M299 431h1M302 434h1M337 434h1M305 437h1M308 439h1M336 444h1M342 465h5M340 466h2M347 466h2M339 467h1M349 467h1M338 468h1M350 468h1M337 469h1M351 469h1M337 470h1M351 470h1M336 471h1M352 471h1M336 472h1M352 472h1M336 473h1M344 473h1M352 473h1M336 474h1M352 474h1M336 475h1M352 475h1M337 476h1M351 476h1M337 477h1M351 477h1M338 478h1M350 478h1M339 479h1M349 479h1M340 480h2M347 480h2M342 481h5M227 544h5M226 545h1M232 545h1M225 546h1M233 546h1M224 547h1M234 547h1M223 548h1M235 548h1M223 549h1M235 549h1M223 550h1M235 550h1M223 551h1M235 551h1M223 552h1M235 552h1M224 553h1M234 553h1M225 554h1M233 554h1M225 555h1M233 555h1M221 556h1M225 556h1M233 556h1M222 557h1M224 557h1M234 557h1M223 558h1M235 558h1M236 559h1M237 560h1"/>
<path stroke="#00ff00" d="M365 38h1M371 38h1M377 38h1M364 39h2M370 39h2M376 39h1M364 40h1M366 40h1M370 40h1M372 40h1M376 40h1M363 41h1M366 41h1M369 41h1M372 41h1M375 41h1M362 42h1M366 42h1M368 42h1M372 42h1M374 42h1M362 43h1M367 43h2M373 43h2M361 44h1M367 44h1M373 44h1M365 48h1M371 48h1M377 48h1M364 49h2M370 49h2M376 49h1M364 50h1M366 50h1M370 50h1M372 50h1M376 50h1M363 51h1M366 51h1M369 51h1M372 51h1M375 51h1M362 52h1M366 52h1M368 52h1M372 52h1M374 52h1M362 53h1M367 53h2M373 53h2M361 54h1M367 54h1M373 54h1M268 113h1M280 113h1M269 114h1M279 114h1M270 115h1M278 115h1M270 116h1M278 116h1M270 117h1M274 117h1M278 117h1M270 118h1M274 118h1M278 118h1M270 119h9M270 120h1M274 120h1M278 120h1M270 121h1M274 121h1M278 121h1M269 122h1M274 122h1M279 122h1M268 123h1M274 123h1M280 123h1M274 124h1M273 125h3M272 126h1M276 126h1M272 127h1M276 127h1M747 127h3M272 128h1M276 128h1M745 128h2M750 128h2M273 129h3M744 129h1M749 129h1M752 129h1M745 130h2M749 130h1M752 130h1M744 131h1M747 131h1M750 131h2M744 132h1M747 132h1M752 132h1M745 133h2M750 133h2M747 134h3M278 151h1M333 159h1M337 162h1M334 163h1M335 165h1M338 165h1M750 166h3M336 167h1M751 167h2M338 168h1M750 168h1M752 168h1M336 169h1M745 169h1M749 169h1M746 170h1M748 170h1M337 171h1M339 171h1M747 171h1M746 172h1M748 172h1M337 173h1M745 173h1M749 173h1M340 174h1M744 174h1M338 175h1M339 177h1M341 177h1M339 179h1M342 180h1M340 181h1M341 183h1M343 183h1M341 185h1M344 186h1M342 187h1M343 189h1M345 189h1M343 191h1M346 192h1M344 193h1M345 195h1M347 195h1M345 197h1M348 198h1M346 199h1M346 201h1M349 201h1M347 203h1M350 204h1M348 205h1M744 206h1M752 206h1M348 207h1M351 207h1M745 207h1M751 207h1M746 208h1M750 208h1M349 209h1M746 209h1M750 209h1M351 210h1M744 210h9M350 211h1M746 211h1M750 211h1M746 212h1M750 212h1M350 213h1M352 213h1M745 213h1M751 213h1M744 214h1M752 214h1M351 215h1M353 216h1M352 217h1M352 219h1M354 219h1M353 221h1M355 222h1M354 223h1M354 225h1M356 225h1M355 227h1M357 228h1M355 229h1M356 231h1M358 231h1M357 233h1M359 234h1M357 235h1M358 237h1M360 237h1M359 239h1M361 240h1M359 241h1M360 243h1M362 243h1M361 245h1M363 246h1M361 247h1M362 249h1M364 249h1M362 251h1M364 252h1M363 253h1M364 255h2M746 256h1M750 256h1M364 257h1M747 257h3M366 258h1M746 258h1M750 258h1M365 259h1M746 259h1M750 259h1M746 260h1M750 260h1M366 261h2M747 261h3M748 262h1M366 263h1M746 263h5M368 264h1M748 264h1M367 265h1M747 266h3M368 267h2M746 267h1M750 267h1M746 268h1M750 268h1M368 269h1M746 269h1M750 269h1M370 270h1M747 270h3M369 271h1M748 271h1M158 272h1M746 272h5M370 273h2M748 273h1M748 274h1M161 275h1M370 275h1M372 276h1M371 277h1M164 278h1M371 279h1M373 279h1M167 280h1M372 281h1M374 282h1M170 283h1M373 283h1M373 285h1M375 285h1M173 286h1M374 287h1M376 288h1M176 289h1M375 289h1M375 291h2M179 292h1M376 293h1M377 294h1M182 295h1M377 295h1M185 297h1M377 297h2M378 299h1M188 300h1M379 300h1M379 301h1M191 303h1M379 303h2M380 305h1M194 306h1M381 306h1M745 306h1M751 306h1M380 307h1M746 307h1M750 307h1M746 308h1M748 308h1M750 308h1M197 309h1M381 309h2M746 309h5M746 310h1M748 310h1M750 310h1M200 311h1M382 311h1M745 311h1M748 311h1M751 311h1M383 312h1M747 312h3M382 313h1M747 313h1M749 313h1M203 314h1M748 314h1M383 315h2M206 317h1M384 317h1M385 318h1M384 319h1M209 320h1M385 321h2M212 323h1M386 323h1M387 324h1M215 325h1M386 325h1M387 327h2M218 328h1M387 329h1M389 330h1M221 331h1M388 331h1M389 333h1M224 334h1M389 335h1M390 336h1M227 337h1M390 337h1M391 339h1M230 340h1M391 341h1M233 342h1M392 342h1M392 343h1M236 345h1M393 345h1M393 347h1M239 348h1M394 348h1M394 349h1M242 351h1M395 351h1M395 353h1M245 354h1M396 354h1M396 355h1M39 356h1M53 356h1M248 356h1M40 357h1M52 357h1M396 357h2M41 358h11M43 359h1M49 359h1M251 359h1M397 359h1M43 360h1M49 360h1M398 360h1M43 361h1M49 361h1M398 361h1M43 362h1M49 362h1M254 362h1M43 363h1M49 363h1M398 363h2M43 364h1M49 364h1M43 365h1M49 365h1M257 365h1M399 365h1M43 366h1M49 366h1M400 366h1M43 367h1M49 367h1M400 367h1M43 368h1M49 368h1M260 368h1M43 369h1M49 369h1M400 369h2M41 370h11M263 370h1M40 371h1M52 371h1M401 371h1M39 372h1M53 372h1M402 372h1M266 373h1M402 373h1M402 375h1M269 376h1M403 377h1M403 378h1M272 379h1M404 379h1M404 381h1M275 382h1M405 383h1M405 384h1M278 385h1M405 385h1M421 385h1M281 387h1M406 387h1M407 389h1M284 390h1M407 390h1M407 391h1M287 393h1M408 393h1M290 396h1M443 396h5M442 397h1M448 397h1M441 398h1M449 398h1M293 399h1M441 399h1M449 399h1M441 400h1M449 400h1M296 401h1M441 401h1M449 401h1M441 402h1M449 402h1M442 403h1M448 403h1M299 404h1M443 404h5M445 405h1M445 406h1M302 407h1M445 407h1M441 408h9M445 409h1M305 410h1M445 410h1M445 411h1M445 412h1M308 413h1M311 415h1M314 418h1M317 421h1M320 424h1M323 427h1M326 430h1M329 432h1M332 435h1M335 438h1M311 448h1M310 470h1M318 470h1M311 471h1M317 471h1M312 472h5M311 473h1M317 473h1M310 474h1M318 474h1M310 475h1M318 475h1M310 476h1M318 476h1M310 477h1M318 477h1M310 478h1M318 478h1M311 479h1M317 479h1M312 480h5M314 481h1M314 482h1M481 482h5M314 483h1M480 483h1M486 483h1M310 484h9M479 484h1M487 484h1M314 485h1M479 485h1M487 485h1M314 486h1M479 486h1M487 486h1M480 487h1M486 487h1M475 488h7M485 488h7M475 492h17"/>
<path stroke="#ffff00" d="M480 107h1M486 107h1M490 107h3M479 108h2M486 108h2M489 108h1M493 108h1M478 109h1M480 109h1M486 109h1M488 109h1M494 109h1M480 110h1M485 110h1M487 110h1M494 110h1M480 111h1M484 111h1M488 111h1M494 111h1M480 112h1M484 112h1M489 112h1M493 112h1M480 113h1M484 113h1M490 113h3M480 114h1M484 114h1M491 114h1M480 115h1M484 115h1M492 115h1M481 116h1M483 116h1M493 116h1M745 116h1M752 116h1M482 117h1M494 117h1M746 117h6M482 118h1M494 118h1M747 118h1M750 118h1M482 119h1M494 119h1M747 119h1M750 119h1M482 120h1M494 120h1M747 120h1M750 120h1M482 121h1M494 121h1M747 121h1M750 121h1M493 122h1M747 122h1M750 122h1M492 123h1M746 123h6M745 124h1M752 124h1M334 154h1M747 158h3M334 159h1M746 159h1M750 159h1M335 160h1M746 160h1M750 160h1M744 161h4M749 161h4M744 163h9M746 196h1M749 196h1M752 196h1M745 197h2M748 197h2M751 197h1M745 198h1M747 198h2M750 198h2M744 199h1M747 199h1M750 199h1M746 201h1M749 201h1M752 201h1M745 202h2M748 202h2M751 202h1M745 203h1M747 203h2M750 203h2M744 204h1M747 204h1M750 204h1M40 221h1M52 221h1M41 222h1M51 222h1M42 223h1M50 223h1M43 224h1M49 224h1M44 225h5M43 226h1M49 226h1M42 227h1M50 227h1M41 228h1M51 228h1M40 229h1M52 229h1M40 230h1M52 230h1M40 231h1M52 231h1M40 232h1M52 232h1M40 233h1M52 233h1M41 234h1M51 234h1M42 235h1M50 235h1M43 236h1M49 236h1M44 237h5M747 296h1M745 297h5M747 298h1M747 299h1M749 299h2M747 300h2M751 300h1M747 301h1M751 301h1M747 302h1M750 302h1M747 303h1M750 303h1M751 304h1M420 376h1M419 378h1M417 380h1M416 382h1M414 385h1M412 388h1M409 391h1M239 436h1M224 455h1M224 456h1M220 457h9M224 458h1M224 459h1M224 460h1M224 461h1M228 461h3M224 462h1M227 462h1M231 462h1M224 463h3M232 463h1M224 464h1M232 464h1M224 465h1M232 465h1M224 466h1M231 466h1M224 467h1M230 467h1M224 468h1M230 468h1M224 469h1M230 469h1M231 470h1M232 471h1M356 545h1M360 545h1M364 545h1M357 546h1M359 546h1M361 546h1M363 546h1M365 546h1M358 547h1M362 547h1M366 547h1M370 547h1M358 548h1M362 548h1M366 548h1M369 548h2M358 549h1M362 549h1M366 549h1M368 549h1M370 549h1M358 550h1M362 550h1M366 550h2M370 550h1M358 551h1M362 551h1M366 551h1M370 551h1M358 552h1M362 552h1M366 552h1M370 552h1M358 553h1M362 553h1M366 553h1M370 553h1M358 554h1M362 554h1M366 554h1M370 554h1M358 555h1M362 555h1M366 555h1M370 555h1M358 556h1M362 556h1M366 556h1M370 556h1M358 557h1M362 557h1M366 557h1M370 557h1M358 558h1M362 558h1M367 558h1M369 558h1M358 559h1M362 559h1M368 559h1M367 560h1M369 560h1M366 561h1M370 561h1"/>
<path stroke="#0000ff" d="M226 37h1M242 37h1M227 38h1M241 38h1M228 39h1M240 39h1M229 40h1M239 40h1M229 41h1M239 41h1M230 42h1M238 42h1M230 43h1M238 43h1M230 44h1M238 44h1M226 45h17M230 46h1M238 46h1M230 47h1M238 47h1M230 48h1M238 48h1M229 49h1M239 49h1M229 50h1M239 50h1M228 51h1M240 51h1M227 52h1M241 52h1M226 53h1M242 53h1M349 120h1M355 120h1M361 120h1M349 121h1M355 121h1M361 121h1M348 122h3M353 122h5M360 122h3M349 123h1M355 123h1M361 123h1M349 124h1M355 124h1M361 124h1M350 125h1M355 125h1M360 125h1M350 126h1M355 126h1M360 126h1M351 127h2M355 127h1M358 127h2M353 128h5M355 129h1M355 130h1M355 131h1M351 132h9M355 133h1M355 134h1M355 135h1M355 136h1M747 136h3M746 137h1M750 137h1M745 138h1M751 138h1M745 139h1M751 139h1M745 140h1M751 140h1M746 141h1M750 141h1M744 142h1M746 142h1M750 142h1M745 143h1M751 143h1M752 144h1M338 154h1M279 158h1M279 160h1M280 162h1M280 164h1M280 166h2M280 168h1M280 170h1M282 170h1M281 172h1M281 174h2M281 176h1M750 176h3M751 177h2M281 178h1M283 178h1M750 178h1M752 178h1M745 179h1M749 179h1M282 180h1M746 180h1M748 180h1M747 181h1M282 182h1M284 182h1M746 182h1M748 182h1M745 183h1M749 183h1M282 184h1M744 184h1M282 186h1M285 186h1M282 188h1M283 190h1M286 190h1M283 192h1M283 194h1M286 194h1M283 196h1M284 198h1M287 198h1M284 200h1M284 202h1M288 202h1M284 204h1M285 206h1M289 206h1M285 208h1M285 210h1M290 210h1M285 212h1M285 214h1M290 214h1M286 216h1M745 216h2M750 216h2M744 217h1M747 217h1M749 217h1M752 217h1M286 218h1M291 218h1M744 218h1M747 218h1M749 218h1M752 218h1M745 219h1M747 219h1M749 219h1M751 219h1M286 220h1M748 220h1M748 221h1M286 222h1M292 222h1M748 222h1M748 223h1M287 224h1M748 224h1M287 226h1M293 226h1M460 226h1M465 226h3M472 226h1M460 227h1M464 227h1M468 227h1M472 227h1M287 228h1M460 228h1M464 228h1M468 228h1M472 228h1M460 229h1M464 229h1M468 229h1M472 229h1M287 230h1M294 230h1M460 230h1M465 230h3M472 230h1M461 231h1M471 231h1M287 232h1M461 232h1M471 232h1M462 233h2M469 233h2M288 234h1M294 234h1M464 234h5M466 235h1M288 236h1M466 236h1M466 237h1M288 238h1M295 238h1M462 238h9M466 239h1M288 240h1M466 240h1M466 241h1M289 242h1M296 242h1M466 242h1M289 244h1M438 245h1M289 246h1M297 246h1M746 246h3M745 247h1M749 247h2M289 248h1M746 248h1M750 248h1M747 249h1M751 249h1M289 250h1M298 250h1M747 250h1M751 250h1M747 251h1M751 251h1M290 252h1M746 252h1M750 252h1M745 253h1M749 253h2M290 254h1M298 254h1M746 254h3M290 256h1M290 258h1M299 258h1M291 260h1M291 262h1M300 262h1M291 264h1M291 266h1M301 266h1M291 268h1M292 270h1M302 270h1M292 272h1M292 274h1M302 274h1M292 276h1M293 278h1M303 278h1M293 280h1M293 282h1M304 282h1M293 284h1M293 286h1M305 286h1M294 288h1M294 290h1M306 290h1M294 292h1M294 294h1M306 294h1M295 296h1M295 298h1M307 298h1M295 300h1M295 302h1M308 302h1M296 304h1M296 306h1M309 306h1M296 308h1M296 310h1M309 310h1M296 312h1M297 314h1M310 314h1M297 316h1M745 316h1M748 316h1M751 316h1M744 317h2M747 317h3M751 317h2M297 318h1M311 318h1M745 318h1M748 318h1M751 318h1M746 319h1M748 319h1M750 319h1M297 320h1M747 320h3M748 321h1M298 322h1M312 322h1M746 322h5M748 323h1M298 324h1M748 324h1M298 326h1M313 326h1M745 326h1M748 326h1M751 326h1M745 327h1M747 327h1M749 327h1M751 327h1M298 328h1M745 328h1M748 328h1M751 328h1M746 329h1M750 329h1M298 330h1M313 330h1M747 330h3M748 331h1M299 332h1M746 332h5M748 333h1M299 334h1M314 334h1M748 334h1M299 336h1M299 338h1M315 338h1M300 340h1M300 342h1M316 342h1M300 344h1M300 346h1M317 346h1M300 348h1M301 350h1M317 350h1M301 352h1M301 354h1M318 354h1M301 356h1M302 358h1M319 358h1M302 360h1M544 361h1M548 361h1M552 361h1M302 362h1M320 362h1M545 362h1M547 362h1M549 362h1M551 362h1M553 362h1M546 363h1M550 363h1M554 363h1M302 364h1M546 364h1M550 364h1M554 364h1M546 365h1M550 365h1M554 365h1M302 366h1M321 366h1M546 366h1M550 366h1M554 366h1M546 367h1M550 367h1M554 367h1M303 368h1M546 368h1M550 368h1M554 368h1M546 369h1M550 369h1M554 369h1M303 370h1M321 370h1M546 370h1M550 370h1M554 370h1M546 371h1M550 371h1M554 371h1M303 372h1M546 372h1M550 372h1M554 372h1M559 372h1M546 373h1M550 373h1M554 373h1M558 373h3M303 374h1M322 374h1M546 374h1M550 374h1M554 374h1M559 374h1M546 375h1M550 375h1M554 375h1M559 375h1M304 376h1M555 376h1M558 376h1M556 377h2M304 378h1M323 378h1M304 380h1M425 380h1M451 380h5M450 381h1M456 381h2M304 382h1M324 382h1M449 382h1M458 382h1M450 383h1M459 383h1M304 384h1M451 384h1M460 384h1M452 385h1M460 385h1M305 386h1M325 386h1M452 386h1M461 386h1M453 387h1M461 387h1M305 388h1M453 388h1M461 388h1M453 389h1M461 389h1M305 390h1M325 390h1M452 390h1M461 390h1M452 391h1M460 391h1M305 392h1M451 392h1M460 392h1M450 393h1M459 393h1M306 394h1M326 394h1M449 394h1M458 394h1M450 395h1M456 395h2M306 396h1M451 396h5M306 398h1M327 398h1M306 400h1M307 402h1M328 402h1M307 404h1M307 406h1M329 406h1M307 408h1M307 410h1M329 410h1M308 412h1M308 414h1M330 414h1M308 416h1M308 418h1M331 418h1M309 420h1M309 422h1M332 422h1M309 424h1M309 426h1M333 426h1M309 428h1M310 430h1M333 430h1M310 432h1M310 434h1M334 434h1M310 436h1M311 438h1M311 440h1M311 442h1M110 476h5M107 477h3M115 477h1M106 478h1M116 478h3M105 479h1M115 479h1M119 479h1M104 480h1M114 480h1M120 480h1M114 481h1M120 481h1M106 482h3M114 482h1M120 482h1M105 483h1M109 483h1M115 483h1M119 483h1M104 484h1M110 484h1M116 484h3M104 485h1M110 485h1M104 486h1M110 486h1M120 486h1M105 487h1M109 487h1M119 487h1M106 488h3M118 488h1M109 489h1M115 489h3M110 490h5"/>
<path stroke="#00ffff" d="M433 247h1M433 248h1M433 249h1M433 250h1M432 251h1M432 252h1M432 253h1M432 254h1M432 255h1M432 256h1M431 257h1M432 258h1M431 259h2M431 260h1M431 261h1M431 262h1M430 263h1M431 264h1M430 265h2M431 266h1M430 267h1M430 268h2M429 269h1M430 270h1M429 271h1M431 271h1M430 272h1M429 273h1M430 274h1M428 275h1M429 276h1M428 277h1M430 277h1M429 278h1M428 279h1M429 280h2M427 281h1M429 282h1M427 283h1M429 283h1M428 284h1M426 285h1M428 286h2M426 287h1M428 288h1M426 289h1M429 289h1M428 290h1M425 291h1M427 292h2M425 293h1M427 294h1M425 295h1M428 295h1M427 296h1M424 297h1M427 298h2M424 299h1M426 300h1M424 301h1M428 301h1M426 302h1M423 303h1M426 304h2M423 305h1M426 306h1M423 307h1M427 307h1M425 308h1M422 309h1M425 310h1M427 310h1M422 311h1M425 312h1M422 313h1M426 313h1M425 314h1M421 315h1M424 316h1M426 316h1M421 317h1M424 318h1M421 319h1M426 319h1M424 320h1M420 321h1M424 322h2M420 323h1M423 324h1M420 325h1M425 325h1M423 326h1M419 327h1M423 328h1M425 328h1M419 329h1M423 330h1M419 331h1M425 331h1M422 332h1M418 333h1M422 334h1M424 334h1M418 335h1M422 336h1M418 337h1M424 337h1M422 338h1M417 339h1M421 340h1M424 340h1M417 341h1M421 342h1M417 343h1M423 343h1M421 344h1M416 345h1M421 346h1M423 346h1M416 347h1M420 348h1M416 349h1M423 349h1M420 350h1M415 351h1M420 352h1M422 352h1M415 353h1M420 354h1M415 355h1M422 355h1M419 356h1M414 357h1M419 358h1M422 358h1M414 359h1M419 360h1M413 361h1M422 361h1M419 362h1M413 363h1M418 364h1M421 364h1M413 365h1M418 366h1M412 367h1M421 367h1M418 368h1M412 369h1M418 370h1M421 370h1M412 371h1M417 372h1M411 373h1M420 373h1M417 374h1M411 375h1M417 376h1M411 377h1M417 378h1M410 379h1M416 380h1M410 381h1M410 383h1M409 385h1M409 387h1M409 389h1M408 391h1"/>
<path stroke="#ffffff" d="M285 15h28M275 16h10M301 16h1M313 16h10M265 17h10M301 17h1M323 17h10M255 18h10M301 18h1M333 18h10M248 19h7M301 19h1M343 19h8M243 20h5M301 20h1M351 20h5M238 21h5M301 21h1M356 21h5M234 22h4M301 22h1M361 22h4M230 23h4M301 23h1M365 23h4M226 24h4M301 24h1M369 24h3M223 25h3M301 25h1M372 25h4M220 26h3M301 26h1M376 26h3M217 27h3M301 27h1M379 27h3M214 28h3M301 28h1M382 28h3M211 29h3M301 29h1M385 29h3M207 30h4M301 30h1M388 30h3M204 31h3M301 31h1M391 31h4M201 32h3M301 32h1M395 32h3M199 33h2M301 33h1M398 33h2M197 34h2M301 34h1M400 34h2M195 35h2M301 35h1M402 35h2M192 36h3M301 36h1M404 36h3M190 37h2M301 37h1M407 37h2M188 38h2M301 38h1M409 38h2M186 39h2M301 39h1M411 39h2M183 40h3M301 40h1M413 40h3M181 41h2M301 41h1M416 41h2M179 42h2M301 42h1M418 42h2M177 43h2M301 43h1M420 43h2M174 44h3M301 44h1M422 44h3M172 45h2M301 45h1M425 45h2M170 46h2M301 46h1M427 46h2M168 47h2M301 47h1M429 47h2M166 48h2M301 48h1M431 48h2M164 49h2M301 49h1M433 49h2M162 50h2M301 50h1M435 50h2M160 51h2M301 51h1M437 51h2M158 52h2M301 52h1M439 52h2M157 53h1M160 53h1M301 53h1M441 53h1M155 54h2M161 54h1M301 54h1M442 54h2M153 55h2M161 55h1M301 55h1M442 55h1M444 55h1M152 56h1M162 56h1M301 56h1M441 56h1M445 56h2M150 57h2M162 57h1M301 57h1M441 57h1M447 57h2M149 58h1M163 58h1M301 58h1M440 58h1M449 58h1M147 59h2M163 59h1M301 59h1M440 59h1M450 59h2M146 60h1M164 60h1M287 60h24M439 60h1M452 60h1M144 61h2M165 61h1M270 61h17M301 61h1M311 61h17M438 61h1M453 61h2M143 62h1M165 62h1M264 62h6M281 62h1M301 62h1M321 62h1M328 62h6M438 62h1M455 62h1M141 63h2M166 63h1M260 63h4M281 63h1M301 63h1M321 63h1M334 63h4M437 63h1M456 63h2M140 64h1M166 64h1M254 64h7M281 64h1M301 64h1M321 64h1M338 64h6M437 64h1M458 64h1M138 65h2M167 65h1M248 65h6M260 65h1M281 65h1M301 65h1M321 65h1M342 65h1M344 65h6M436 65h1M459 65h2M136 66h2M167 66h1M244 66h4M260 66h1M281 66h1M301 66h1M321 66h1M342 66h1M350 66h4M435 66h1M461 66h1M135 67h1M168 67h1M240 67h4M260 67h1M281 67h1M301 67h1M321 67h1M342 67h1M354 67h5M435 67h1M462 67h2M133 68h2M169 68h1M236 68h5M261 68h1M282 68h1M300 68h1M321 68h1M341 68h1M359 68h4M434 68h1M464 68h2M132 69h1M169 69h1M232 69h4M240 69h1M261 69h1M282 69h1M300 69h1M320 69h1M341 69h1M362 69h5M434 69h1M466 69h1M130 70h2M170 70h1M229 70h3M240 70h1M261 70h1M282 70h1M300 70h1M320 70h1M341 70h1M362 70h1M367 70h2M433 70h1M467 70h1M129 71h1M170 71h1M227 71h2M241 71h1M261 71h1M282 71h1M300 71h1M320 71h1M341 71h1M362 71h1M369 71h3M432 71h1M468 71h2M128 72h1M171 72h1M224 72h3M241 72h1M261 72h1M282 72h1M300 72h1M320 72h1M340 72h1M361 72h1M372 72h3M432 72h1M470 72h1M126 73h2M171 73h1M220 73h4M241 73h1M261 73h1M282 73h1M300 73h1M320 73h1M340 73h1M361 73h1M375 73h4M431 73h1M471 73h1M125 74h1M172 74h1M217 74h4M241 74h1M262 74h1M282 74h1M300 74h1M320 74h1M340 74h1M361 74h1M379 74h3M431 74h1M472 74h2M124 75h1M172 75h1M214 75h3M220 75h1M242 75h1M262 75h1M282 75h1M288 75h22M320 75h1M340 75h1M361 75h1M382 75h2M430 75h1M474 75h1M123 76h1M173 76h1M212 76h2M221 76h1M242 76h1M262 76h1M272 76h16M310 76h16M339 76h1M360 76h1M382 76h1M384 76h3M430 76h1M475 76h1M122 77h1M174 77h1M209 77h3M221 77h1M242 77h1M262 77h1M265 77h7M326 77h8M339 77h1M360 77h1M382 77h1M387 77h2M429 77h1M476 77h1M121 78h1M174 78h1M207 78h2M221 78h1M242 78h1M259 78h6M334 78h6M360 78h1M381 78h1M389 78h2M428 78h1M477 78h1M120 79h1M175 79h1M205 79h2M222 79h1M243 79h1M255 79h4M339 79h4M360 79h1M381 79h1M391 79h2M428 79h1M478 79h1M119 80h1M175 80h1M203 80h2M222 80h1M243 80h1M251 80h4M343 80h4M359 80h1M380 80h1M393 80h2M427 80h1M479 80h1M118 81h1M176 81h1M201 81h2M222 81h1M243 81h1M247 81h4M347 81h4M359 81h1M380 81h1M395 81h3M427 81h1M480 81h1M117 82h1M176 82h1M199 82h2M222 82h1M244 82h3M351 82h4M359 82h1M379 82h1M398 82h2M426 82h1M481 82h1M115 83h2M177 83h1M197 83h2M200 83h1M223 83h1M240 83h4M352 83h1M355 83h4M379 83h1M400 83h2M425 83h1M482 83h1M114 84h1M178 84h1M194 84h3M201 84h1M223 84h1M236 84h4M351 84h1M359 84h3M379 84h1M401 84h3M425 84h1M483 84h2M113 85h1M178 85h1M192 85h2M201 85h1M223 85h1M232 85h4M351 85h1M362 85h4M378 85h1M400 85h1M404 85h2M424 85h1M485 85h1M111 86h2M179 86h1M190 86h2M202 86h1M224 86h1M229 86h3M234 86h1M351 86h1M366 86h4M378 86h1M400 86h1M406 86h2M424 86h1M486 86h1M110 87h1M179 87h1M188 87h2M202 87h1M224 87h1M227 87h2M235 87h1M351 87h1M370 87h2M377 87h1M399 87h1M408 87h2M423 87h1M487 87h2M109 88h1M180 88h1M187 88h1M203 88h1M225 88h2M235 88h1M350 88h1M372 88h2M377 88h1M399 88h1M410 88h2M422 88h1M489 88h1M108 89h1M180 89h1M185 89h2M203 89h1M221 89h4M235 89h1M350 89h1M374 89h3M398 89h1M412 89h2M422 89h1M490 89h1M107 90h1M181 90h1M183 90h2M204 90h1M217 90h4M236 90h1M350 90h1M377 90h4M398 90h1M414 90h2M421 90h1M491 90h1M106 91h1M181 91h2M204 91h1M214 91h3M236 91h1M350 91h1M381 91h4M397 91h1M416 91h2M421 91h1M492 91h1M105 92h1M180 92h1M182 92h1M205 92h1M212 92h2M236 92h1M349 92h1M385 92h2M397 92h1M418 92h1M420 92h1M493 92h1M104 93h1M178 93h2M183 93h1M205 93h1M210 93h2M237 93h1M349 93h1M387 93h2M396 93h1M419 93h2M494 93h1M103 94h1M176 94h2M183 94h1M206 94h1M208 94h2M237 94h1M349 94h1M389 94h2M396 94h1M420 94h3M495 94h1M102 95h1M174 95h2M184 95h1M206 95h2M237 95h1M349 95h1M391 95h2M395 95h1M419 95h1M423 95h2M496 95h1M101 96h1M173 96h1M184 96h1M204 96h2M238 96h1M348 96h1M393 96h3M419 96h1M425 96h1M497 96h1M100 97h1M171 97h2M185 97h1M202 97h2M238 97h1M348 97h1M395 97h2M418 97h1M426 97h2M498 97h1M99 98h1M170 98h1M185 98h1M200 98h2M238 98h1M348 98h1M397 98h2M417 98h1M428 98h1M499 98h1M98 99h1M169 99h1M186 99h1M198 99h2M239 99h1M348 99h1M399 99h2M417 99h1M429 99h1M500 99h1M97 100h1M167 100h2M186 100h1M196 100h2M239 100h1M347 100h1M401 100h2M416 100h1M430 100h2M501 100h1M96 101h1M166 101h1M187 101h1M194 101h2M239 101h1M347 101h1M403 101h2M416 101h1M432 101h1M502 101h1M95 102h1M164 102h2M187 102h1M192 102h2M239 102h1M347 102h1M405 102h2M415 102h1M433 102h2M503 102h1M94 103h1M163 103h2M188 103h1M190 103h2M240 103h1M347 103h1M407 103h2M414 103h1M435 103h1M504 103h1M93 104h1M162 104h1M165 104h1M188 104h2M240 104h1M346 104h1M409 104h2M414 104h1M436 104h1M505 104h1M92 105h1M160 105h2M165 105h1M187 105h1M240 105h1M283 105h33M346 105h1M411 105h1M413 105h1M437 105h2M506 105h1M91 106h1M159 106h1M166 106h1M185 106h2M241 106h1M276 106h7M316 106h7M346 106h1M412 106h2M436 106h1M439 106h1M507 106h1M90 107h1M157 107h2M167 107h1M184 107h1M241 107h1M269 107h7M323 107h6M346 107h1M414 107h1M436 107h1M440 107h2M508 107h1M89 108h1M156 108h1M168 108h1M182 108h2M241 108h1M263 108h6M329 108h7M345 108h1M415 108h2M435 108h1M442 108h1M509 108h1M88 109h1M155 109h1M168 109h1M181 109h1M242 109h1M258 109h5M336 109h5M345 109h1M417 109h1M434 109h1M443 109h1M510 109h1M87 110h1M153 110h2M169 110h1M179 110h2M242 110h1M254 110h4M341 110h5M418 110h2M433 110h1M444 110h2M511 110h1M86 111h1M152 111h1M170 111h1M177 111h2M242 111h1M251 111h3M345 111h3M420 111h2M433 111h1M446 111h1M512 111h1M86 112h1M151 112h1M171 112h1M175 112h2M243 112h1M248 112h3M348 112h3M422 112h2M432 112h1M447 112h1M512 112h1M85 113h1M149 113h2M171 113h1M174 113h1M243 113h1M245 113h3M351 113h3M424 113h1M431 113h1M448 113h1M513 113h1M84 114h1M148 114h1M172 114h2M241 114h4M354 114h4M425 114h1M430 114h1M449 114h2M514 114h1M83 115h1M147 115h1M171 115h2M238 115h3M358 115h3M426 115h1M430 115h1M451 115h1M515 115h1M83 116h1M146 116h1M148 116h1M170 116h1M235 116h3M361 116h3M427 116h3M452 116h1M515 116h1M82 117h1M145 117h1M149 117h1M169 117h1M232 117h3M364 117h3M429 117h1M453 117h1M516 117h1M81 118h1M144 118h1M149 118h1M168 118h1M229 118h3M367 118h3M430 118h1M454 118h1M517 118h1M80 119h1M142 119h2M150 119h1M166 119h2M226 119h3M370 119h3M431 119h2M453 119h1M455 119h2M518 119h1M79 120h1M141 120h1M151 120h1M165 120h1M224 120h2M373 120h2M433 120h1M452 120h1M457 120h1M519 120h1M78 121h1M140 121h1M152 121h1M164 121h1M222 121h2M375 121h2M434 121h1M451 121h1M458 121h1M520 121h1M77 122h1M139 122h1M153 122h1M162 122h2M219 122h3M377 122h2M435 122h2M450 122h1M459 122h1M521 122h1M76 123h1M138 123h1M154 123h1M161 123h1M217 123h2M379 123h2M437 123h1M449 123h1M460 123h1M522 123h1M75 124h1M136 124h2M154 124h1M160 124h1M215 124h2M381 124h2M438 124h1M449 124h1M461 124h1M523 124h1M74 125h1M135 125h1M155 125h1M158 125h2M213 125h2M383 125h2M439 125h1M448 125h1M462 125h2M524 125h1M73 126h1M134 126h1M156 126h2M211 126h2M385 126h2M440 126h2M447 126h1M464 126h1M525 126h1M73 127h1M133 127h1M156 127h1M209 127h2M387 127h2M442 127h1M446 127h1M465 127h1M525 127h1M72 128h1M132 128h1M155 128h1M207 128h2M389 128h2M441 128h1M443 128h1M445 128h1M466 128h1M526 128h1M71 129h1M131 129h2M154 129h1M205 129h2M391 129h2M440 129h1M444 129h1M467 129h1M527 129h1M70 130h1M130 130h1M133 130h1M152 130h2M203 130h2M393 130h2M439 130h1M445 130h1M468 130h1M528 130h1M70 131h1M129 131h1M134 131h1M151 131h1M202 131h1M395 131h2M439 131h1M446 131h2M469 131h1M528 131h1M69 132h1M128 132h1M135 132h1M150 132h1M200 132h2M397 132h2M438 132h1M448 132h1M469 132h2M529 132h1M68 133h1M127 133h1M136 133h1M149 133h1M199 133h1M399 133h1M437 133h1M449 133h1M468 133h1M471 133h1M530 133h1M68 134h1M126 134h1M137 134h1M148 134h1M197 134h2M400 134h2M436 134h1M450 134h1M467 134h1M472 134h1M530 134h1M67 135h1M125 135h1M138 135h1M147 135h1M196 135h1M334 135h1M402 135h1M435 135h1M451 135h1M466 135h1M473 135h1M531 135h1M66 136h1M124 136h1M139 136h1M146 136h1M194 136h2M334 136h1M403 136h2M434 136h1M452 136h1M465 136h1M474 136h1M532 136h1M66 137h1M124 137h1M140 137h1M145 137h1M192 137h2M334 137h1M405 137h2M433 137h1M453 137h1M464 137h1M474 137h1M532 137h1M65 138h1M123 138h1M141 138h1M144 138h1M191 138h1M334 138h1M407 138h1M432 138h1M454 138h1M463 138h1M475 138h1M533 138h1M65 139h1M122 139h1M142 139h2M189 139h2M335 139h1M408 139h2M432 139h1M455 139h1M462 139h1M476 139h1M533 139h1M64 140h1M121 140h1M142 140h1M188 140h1M335 140h1M410 140h1M431 140h1M456 140h1M461 140h1M477 140h1M534 140h1M63 141h1M120 141h1M141 141h1M186 141h2M335 141h1M411 141h2M430 141h1M457 141h1M460 141h1M478 141h1M535 141h1M63 142h1M119 142h1M140 142h1M185 142h1M335 142h1M413 142h1M429 142h1M458 142h2M479 142h1M535 142h1M62 143h1M119 143h1M139 143h1M184 143h1M335 143h1M414 143h1M428 143h1M459 143h1M479 143h1M536 143h1M61 144h1M118 144h1M138 144h1M182 144h2M335 144h1M415 144h2M427 144h1M460 144h1M480 144h1M537 144h1M61 145h1M117 145h1M119 145h1M137 145h1M181 145h1M336 145h1M417 145h1M426 145h1M461 145h1M481 145h1M537 145h1M60 146h1M116 146h1M120 146h1M136 146h1M180 146h1M336 146h1M418 146h1M426 146h1M462 146h1M482 146h1M538 146h1M59 147h1M115 147h1M121 147h1M135 147h1M179 147h1M336 147h1M419 147h1M425 147h1M463 147h1M483 147h1M539 147h1M59 148h1M114 148h1M122 148h1M134 148h1M177 148h2M336 148h1M420 148h1M424 148h1M464 148h1M482 148h1M484 148h1M539 148h1M58 149h1M113 149h1M123 149h2M133 149h1M176 149h1M421 149h3M465 149h1M480 149h2M485 149h1M540 149h1M57 150h1M113 150h1M125 150h1M132 150h1M175 150h1M423 150h1M466 150h1M479 150h1M485 150h1M541 150h1M57 151h1M112 151h1M126 151h1M131 151h1M174 151h1M424 151h1M467 151h1M478 151h1M486 151h1M541 151h1M56 152h1M111 152h1M127 152h1M130 152h1M173 152h1M425 152h1M468 152h1M477 152h1M487 152h1M542 152h1M55 153h1M110 153h1M128 153h1M130 153h1M171 153h2M426 153h2M468 153h1M476 153h1M488 153h1M543 153h1M55 154h1M110 154h1M129 154h1M170 154h1M428 154h1M469 154h1M474 154h2M488 154h1M543 154h1M54 155h1M109 155h1M128 155h1M169 155h1M429 155h1M470 155h1M473 155h1M489 155h1M544 155h1M54 156h2M108 156h1M127 156h1M168 156h1M430 156h1M471 156h2M490 156h1M544 156h1M53 157h1M56 157h2M107 157h1M126 157h1M167 157h1M431 157h1M472 157h1M491 157h1M545 157h1M52 158h1M58 158h2M107 158h1M125 158h1M166 158h1M432 158h1M473 158h1M491 158h1M546 158h1M52 159h1M60 159h1M106 159h1M125 159h1M165 159h1M433 159h1M473 159h1M492 159h1M546 159h1M51 160h1M61 160h2M105 160h1M124 160h1M164 160h1M434 160h1M474 160h1M493 160h1M545 160h1M547 160h1M51 161h1M63 161h2M105 161h1M123 161h1M163 161h1M435 161h1M475 161h1M493 161h1M543 161h2M547 161h1M50 162h1M65 162h1M104 162h1M106 162h2M122 162h1M162 162h1M436 162h1M476 162h1M494 162h1M541 162h2M548 162h1M50 163h1M66 163h2M103 163h1M108 163h1M122 163h1M161 163h1M437 163h1M476 163h1M495 163h1M539 163h2M548 163h1M49 164h1M68 164h2M102 164h1M109 164h1M121 164h1M160 164h1M438 164h1M477 164h1M495 164h2M538 164h1M549 164h1M49 165h1M70 165h1M102 165h1M110 165h2M120 165h2M159 165h1M439 165h1M478 165h1M493 165h2M496 165h1M536 165h2M549 165h1M48 166h1M71 166h2M101 166h1M112 166h1M119 166h1M122 166h1M158 166h1M440 166h1M479 166h1M492 166h1M497 166h1M534 166h2M550 166h1M48 167h1M73 167h2M100 167h1M113 167h1M119 167h1M123 167h2M157 167h1M441 167h1M479 167h1M491 167h1M498 167h1M532 167h2M550 167h1M47 168h1M75 168h2M100 168h1M114 168h2M118 168h1M125 168h1M156 168h1M442 168h1M480 168h1M489 168h2M498 168h1M531 168h1M551 168h1M47 169h1M77 169h1M99 169h1M116 169h2M126 169h1M155 169h1M443 169h1M481 169h1M488 169h1M499 169h1M529 169h2M551 169h1M46 170h1M78 170h2M98 170h1M116 170h1M127 170h2M154 170h1M444 170h1M482 170h1M487 170h1M500 170h1M527 170h2M552 170h1M46 171h1M80 171h2M97 171h1M115 171h1M129 171h1M153 171h1M445 171h1M483 171h1M485 171h2M501 171h1M525 171h2M552 171h1M45 172h1M82 172h1M97 172h1M115 172h1M130 172h1M153 172h1M445 172h1M483 172h2M501 172h1M523 172h2M553 172h1M45 173h1M83 173h2M96 173h1M114 173h1M131 173h1M152 173h1M446 173h1M484 173h1M502 173h1M522 173h1M553 173h1M44 174h1M85 174h2M95 174h1M113 174h1M132 174h2M151 174h1M447 174h1M485 174h1M503 174h1M520 174h2M554 174h1M44 175h1M87 175h1M95 175h1M112 175h1M134 175h1M150 175h1M448 175h1M486 175h1M503 175h1M518 175h2M554 175h1M44 176h1M88 176h2M94 176h1M112 176h1M135 176h1M149 176h1M449 176h1M486 176h1M504 176h1M516 176h2M554 176h1M43 177h1M90 177h2M94 177h1M111 177h1M136 177h2M148 177h1M450 177h1M487 177h1M504 177h1M515 177h1M555 177h1M43 178h1M92 178h3M111 178h1M138 178h1M148 178h1M450 178h1M487 178h1M505 178h1M513 178h2M555 178h1M42 179h1M93 179h1M95 179h2M110 179h1M139 179h1M147 179h1M451 179h1M488 179h1M505 179h1M511 179h2M556 179h1M42 180h1M92 180h1M97 180h1M110 180h1M140 180h2M146 180h1M452 180h1M488 180h1M506 180h1M509 180h2M556 180h1M41 181h1M91 181h1M98 181h2M109 181h1M142 181h1M145 181h1M453 181h1M489 181h1M507 181h2M557 181h1M41 182h1M91 182h1M100 182h2M108 182h1M143 182h2M454 182h1M490 182h1M506 182h2M557 182h1M40 183h1M90 183h1M102 183h1M108 183h1M144 183h1M454 183h1M490 183h1M504 183h2M508 183h1M558 183h1M40 184h1M90 184h1M103 184h2M107 184h1M143 184h1M455 184h1M491 184h1M502 184h2M508 184h1M558 184h1M40 185h1M89 185h1M105 185h2M142 185h1M456 185h1M492 185h1M500 185h2M509 185h1M558 185h1M39 186h1M89 186h1M106 186h1M141 186h1M457 186h1M492 186h1M498 186h2M509 186h1M559 186h1M39 187h1M88 187h1M105 187h1M141 187h1M457 187h1M493 187h1M496 187h2M510 187h1M559 187h1M38 188h1M87 188h1M104 188h1M140 188h1M458 188h1M494 188h2M511 188h1M560 188h1M38 189h1M87 189h1M104 189h1M139 189h1M459 189h1M494 189h1M511 189h1M560 189h1M37 190h1M86 190h1M103 190h1M139 190h1M459 190h1M495 190h1M512 190h1M561 190h1M37 191h1M86 191h1M103 191h1M138 191h1M460 191h1M495 191h1M512 191h1M561 191h1M36 192h1M85 192h1M102 192h1M137 192h1M461 192h1M496 192h1M513 192h1M562 192h1M36 193h1M85 193h1M102 193h1M137 193h1M461 193h1M496 193h1M513 193h1M562 193h1M36 194h1M84 194h1M101 194h1M136 194h1M462 194h1M497 194h1M514 194h1M562 194h1M35 195h1M84 195h1M101 195h1M136 195h1M462 195h1M497 195h1M514 195h1M563 195h1M35 196h1M84 196h1M100 196h1M135 196h1M463 196h1M498 196h1M514 196h1M563 196h1M34 197h1M83 197h2M100 197h1M134 197h1M464 197h1M498 197h1M515 197h1M564 197h1M34 198h1M83 198h1M85 198h2M99 198h1M134 198h1M464 198h1M499 198h1M515 198h1M564 198h1M33 199h1M82 199h1M87 199h2M99 199h1M133 199h1M465 199h1M499 199h1M516 199h1M565 199h1M33 200h1M82 200h1M89 200h2M98 200h1M132 200h1M466 200h1M500 200h1M515 200h2M565 200h1M32 201h1M81 201h1M91 201h2M98 201h1M132 201h1M466 201h1M499 201h2M513 201h2M517 201h1M566 201h1M32 202h1M81 202h1M93 202h2M97 202h1M131 202h1M467 202h1M497 202h2M501 202h1M511 202h2M517 202h1M566 202h1M32 203h1M80 203h1M95 203h3M130 203h1M468 203h1M495 203h2M501 203h1M509 203h2M518 203h1M566 203h1M31 204h1M80 204h1M96 204h1M130 204h1M468 204h1M493 204h2M502 204h1M507 204h2M518 204h1M567 204h1M31 205h1M79 205h1M96 205h1M129 205h1M469 205h1M491 205h2M502 205h1M505 205h2M519 205h1M567 205h1M31 206h1M79 206h1M95 206h1M129 206h1M469 206h1M489 206h2M503 206h2M519 206h1M567 206h1M30 207h1M78 207h1M95 207h1M128 207h1M470 207h1M486 207h3M503 207h1M520 207h1M568 207h1M30 208h1M78 208h1M94 208h1M128 208h1M470 208h1M484 208h2M504 208h1M520 208h1M568 208h1M30 209h1M77 209h1M94 209h1M127 209h1M471 209h1M482 209h2M504 209h1M521 209h1M568 209h1M30 210h1M77 210h1M93 210h1M127 210h1M471 210h1M480 210h2M505 210h1M521 210h1M568 210h1M29 211h1M77 211h1M93 211h1M126 211h1M472 211h1M478 211h2M505 211h1M521 211h1M569 211h1M29 212h1M76 212h1M92 212h1M126 212h1M472 212h1M476 212h2M506 212h1M522 212h1M569 212h1M29 213h1M76 213h1M92 213h1M125 213h1M473 213h3M506 213h1M522 213h1M569 213h1M28 214h1M75 214h1M91 214h1M125 214h1M507 214h1M523 214h1M570 214h1M28 215h1M75 215h1M91 215h1M124 215h1M474 215h1M507 215h1M523 215h1M570 215h1M28 216h1M75 216h3M91 216h1M124 216h1M474 216h1M507 216h1M523 216h1M570 216h1M27 217h1M74 217h1M78 217h2M90 217h1M123 217h1M475 217h1M508 217h1M524 217h1M571 217h1M27 218h1M74 218h1M80 218h2M90 218h1M123 218h1M475 218h1M508 218h1M524 218h1M571 218h1M27 219h1M74 219h1M82 219h3M90 219h1M122 219h1M476 219h1M508 219h1M524 219h1M571 219h1M26 220h1M73 220h1M85 220h2M90 220h1M122 220h1M476 220h1M508 220h1M523 220h3M572 220h1M26 221h1M73 221h1M87 221h3M122 221h1M476 221h1M509 221h1M520 221h3M525 221h1M572 221h1M26 222h1M73 222h1M89 222h1M121 222h1M477 222h1M509 222h1M516 222h4M525 222h1M572 222h1M25 223h1M73 223h1M89 223h1M121 223h1M477 223h1M509 223h1M513 223h3M525 223h1M573 223h1M25 224h1M72 224h1M89 224h1M120 224h1M478 224h1M509 224h1M511 224h2M526 224h1M573 224h1M25 225h1M72 225h1M88 225h1M120 225h1M478 225h1M510 225h1M526 225h1M573 225h1M24 226h1M72 226h1M88 226h1M119 226h1M479 226h1M510 226h1M526 226h1M574 226h1M24 227h1M71 227h1M87 227h1M119 227h1M479 227h1M511 227h1M527 227h1M574 227h1M24 228h1M71 228h1M87 228h1M119 228h1M479 228h1M511 228h1M527 228h1M574 228h1M24 229h1M70 229h1M86 229h1M118 229h1M480 229h1M512 229h1M528 229h1M574 229h1M23 230h1M70 230h1M86 230h1M118 230h1M480 230h1M512 230h1M528 230h1M575 230h1M23 231h1M70 231h1M86 231h1M118 231h1M480 231h1M512 231h1M528 231h1M575 231h1M23 232h1M69 232h1M85 232h1M117 232h1M481 232h1M513 232h1M529 232h1M575 232h1M23 233h1M69 233h1M85 233h1M117 233h1M481 233h1M513 233h1M529 233h1M575 233h1M22 234h1M69 234h1M85 234h1M117 234h1M481 234h1M513 234h1M529 234h1M576 234h1M22 235h1M69 235h1M85 235h1M116 235h1M482 235h1M513 235h1M529 235h1M576 235h1M22 236h1M68 236h4M84 236h1M116 236h1M482 236h1M514 236h1M530 236h1M576 236h1M22 237h1M68 237h1M72 237h4M84 237h1M116 237h1M482 237h1M514 237h1M530 237h1M576 237h1M21 238h1M68 238h1M76 238h4M84 238h1M115 238h1M454 238h2M483 238h1M514 238h1M530 238h1M577 238h1M21 239h1M68 239h1M80 239h3M84 239h1M115 239h1M452 239h2M483 239h1M514 239h1M530 239h1M577 239h1M21 240h1M67 240h1M83 240h1M115 240h1M450 240h2M483 240h1M515 240h1M528 240h4M577 240h1M21 241h1M67 241h1M83 241h1M114 241h1M448 241h2M484 241h1M515 241h1M524 241h4M531 241h1M577 241h1M21 242h1M67 242h1M83 242h1M114 242h1M446 242h2M484 242h1M515 242h1M520 242h4M531 242h1M577 242h1M20 243h1M67 243h1M83 243h1M114 243h1M444 243h2M484 243h1M515 243h1M517 243h3M531 243h1M578 243h1M20 244h1M66 244h1M82 244h1M114 244h1M484 244h1M516 244h1M532 244h1M578 244h1M20 245h1M66 245h1M82 245h1M113 245h1M485 245h1M516 245h1M532 245h1M578 245h1M20 246h1M66 246h1M82 246h1M113 246h1M485 246h1M516 246h1M532 246h1M578 246h1M20 247h1M66 247h1M81 247h1M113 247h1M485 247h1M517 247h1M532 247h1M578 247h1M19 248h1M65 248h1M81 248h1M112 248h1M486 248h1M517 248h1M533 248h1M579 248h1M19 249h1M65 249h1M81 249h1M112 249h1M486 249h1M517 249h1M533 249h1M579 249h1M19 250h1M65 250h1M81 250h1M112 250h1M486 250h1M517 250h1M533 250h1M579 250h1M19 251h1M65 251h1M80 251h1M111 251h1M487 251h1M518 251h1M533 251h1M579 251h1M19 252h1M65 252h1M80 252h1M111 252h1M487 252h1M518 252h1M533 252h1M579 252h1M19 253h1M65 253h1M80 253h1M111 253h1M487 253h1M518 253h1M533 253h1M579 253h1M19 254h1M64 254h1M80 254h1M110 254h1M488 254h1M518 254h1M534 254h1M579 254h1M18 255h1M64 255h1M79 255h1M110 255h1M488 255h1M519 255h1M534 255h1M580 255h1M18 256h1M64 256h4M79 256h1M110 256h1M488 256h1M519 256h1M534 256h1M580 256h1M18 257h1M64 257h1M68 257h4M79 257h1M110 257h1M488 257h1M519 257h1M534 257h1M580 257h1M18 258h1M64 258h1M72 258h4M79 258h1M109 258h1M489 258h1M519 258h1M534 258h1M580 258h1M18 259h1M64 259h1M76 259h3M109 259h1M489 259h1M520 259h1M534 259h1M580 259h1M18 260h1M63 260h1M78 260h1M109 260h1M489 260h1M520 260h1M531 260h5M580 260h1M18 261h1M63 261h1M78 261h1M109 261h1M489 261h1M520 261h1M525 261h6M535 261h1M580 261h1M18 262h1M63 262h1M78 262h1M109 262h1M489 262h1M520 262h5M535 262h1M580 262h1M18 263h1M63 263h1M78 263h1M108 263h1M490 263h1M520 263h1M535 263h1M580 263h1M18 264h1M62 264h1M78 264h1M108 264h1M490 264h1M520 264h1M536 264h1M580 264h1M17 265h1M62 265h1M77 265h1M108 265h1M490 265h1M521 265h1M536 265h1M581 265h1M17 266h1M62 266h1M77 266h1M108 266h1M490 266h1M521 266h1M536 266h1M581 266h1M17 267h1M62 267h1M77 267h1M108 267h1M134 267h3M490 267h1M521 267h1M536 267h1M581 267h1M17 268h1M62 268h1M77 268h1M108 268h1M137 268h6M490 268h1M521 268h1M536 268h1M581 268h1M17 269h1M62 269h1M77 269h1M107 269h1M143 269h4M491 269h1M521 269h1M536 269h1M581 269h1M17 270h1M61 270h1M77 270h1M107 270h1M491 270h1M521 270h1M537 270h1M581 270h1M17 271h1M61 271h1M77 271h1M107 271h1M491 271h1M521 271h1M537 271h1M581 271h1M17 272h1M61 272h1M76 272h1M107 272h1M491 272h1M522 272h1M537 272h1M581 272h1M17 273h1M61 273h1M76 273h1M107 273h1M491 273h1M522 273h1M537 273h1M581 273h1M17 274h1M61 274h1M76 274h1M107 274h1M491 274h1M522 274h1M537 274h1M581 274h1M16 275h1M61 275h1M76 275h1M107 275h1M491 275h1M522 275h1M537 275h1M582 275h1M16 276h1M61 276h1M76 276h1M106 276h1M492 276h1M522 276h1M537 276h1M582 276h1M16 277h1M61 277h8M76 277h1M106 277h1M492 277h1M522 277h1M537 277h1M582 277h1M16 278h1M61 278h1M69 278h8M106 278h1M492 278h1M522 278h1M537 278h1M582 278h1M16 279h1M61 279h1M76 279h1M106 279h1M492 279h1M522 279h1M537 279h1M582 279h1M16 280h1M61 280h1M76 280h1M106 280h1M492 280h1M522 280h1M537 280h1M582 280h1M16 281h1M61 281h1M76 281h1M106 281h1M492 281h1M522 281h1M530 281h8M582 281h1M16 282h1M61 282h1M76 282h1M106 282h1M492 282h1M522 282h8M537 282h1M582 282h1M16 283h1M61 283h1M76 283h1M105 283h1M493 283h1M522 283h1M537 283h1M582 283h1M16 284h1M61 284h1M76 284h1M105 284h1M493 284h1M522 284h1M537 284h1M582 284h1M15 285h1M61 285h1M76 285h1M105 285h1M493 285h1M522 285h1M537 285h1M583 285h1M15 286h1M61 286h1M76 286h1M105 286h1M493 286h1M522 286h1M537 286h1M583 286h1M15 287h1M60 287h1M76 287h1M105 287h1M493 287h1M522 287h1M538 287h1M583 287h1M15 288h1M60 288h1M75 288h1M105 288h1M493 288h1M523 288h1M538 288h1M583 288h1M15 289h1M60 289h1M75 289h1M105 289h1M493 289h1M523 289h1M538 289h1M583 289h1M15 290h1M60 290h1M75 290h1M105 290h1M493 290h1M523 290h1M538 290h1M583 290h1M15 291h1M60 291h1M75 291h1M105 291h1M493 291h1M523 291h1M538 291h1M583 291h1M15 292h1M60 292h1M75 292h1M105 292h1M493 292h1M523 292h1M538 292h1M583 292h1M15 293h1M60 293h1M75 293h1M105 293h1M493 293h1M523 293h1M538 293h1M583 293h1M15 294h1M60 294h1M75 294h1M105 294h1M493 294h1M523 294h1M538 294h1M583 294h1M15 295h1M60 295h1M75 295h1M105 295h1M493 295h1M523 295h1M538 295h1M583 295h1M15 296h1M60 296h1M75 296h1M105 296h1M493 296h1M523 296h1M538 296h1M583 296h1M15 297h53M75 297h1M105 297h1M493 297h1M523 297h1M538 297h1M583 297h1M15 298h1M60 298h1M68 298h8M105 298h1M493 298h1M523 298h1M538 298h1M583 298h1M15 299h1M60 299h1M75 299h31M131 299h13M493 299h31M538 299h1M583 299h1M15 300h1M60 300h1M75 300h1M105 300h1M493 300h1M523 300h8M538 300h1M583 300h1M15 301h1M60 301h1M75 301h1M105 301h1M493 301h1M523 301h1M531 301h53M15 302h1M60 302h1M75 302h1M105 302h1M493 302h1M523 302h1M538 302h1M583 302h1M15 303h1M60 303h1M75 303h1M105 303h1M493 303h1M523 303h1M538 303h1M583 303h1M15 304h1M60 304h1M75 304h1M105 304h1M493 304h1M523 304h1M538 304h1M583 304h1M15 305h1M60 305h1M75 305h1M105 305h1M493 305h1M523 305h1M538 305h1M583 305h1M15 306h1M60 306h1M75 306h1M105 306h1M493 306h1M523 306h1M538 306h1M583 306h1M15 307h1M60 307h1M75 307h1M105 307h1M493 307h1M523 307h1M538 307h1M583 307h1M15 308h1M60 308h1M75 308h1M105 308h1M493 308h1M523 308h1M538 308h1M583 308h1M15 309h1M60 309h1M75 309h1M105 309h1M493 309h1M523 309h1M538 309h1M583 309h1M15 310h1M60 310h1M76 310h1M105 310h1M493 310h1M522 310h1M538 310h1M583 310h1M15 311h1M61 311h1M76 311h1M105 311h1M493 311h1M522 311h1M537 311h1M583 311h1M15 312h1M61 312h1M76 312h1M105 312h1M493 312h1M522 312h1M537 312h1M583 312h1M16 313h1M61 313h1M76 313h1M105 313h1M493 313h1M522 313h1M537 313h1M582 313h1M16 314h1M61 314h1M76 314h1M105 314h1M493 314h1M522 314h1M537 314h1M582 314h1M16 315h1M61 315h1M76 315h1M105 315h1M493 315h1M522 315h1M537 315h1M582 315h1M16 316h1M61 316h1M68 316h9M106 316h1M492 316h1M522 316h1M537 316h1M582 316h1M16 317h1M61 317h7M76 317h1M106 317h1M492 317h1M522 317h1M537 317h1M582 317h1M16 318h1M61 318h1M76 318h1M106 318h1M492 318h1M522 318h1M537 318h1M582 318h1M16 319h1M61 319h1M76 319h1M106 319h1M492 319h1M522 319h1M537 319h1M582 319h1M16 320h1M61 320h1M76 320h1M106 320h1M492 320h1M522 320h8M537 320h1M582 320h1M16 321h1M61 321h1M76 321h1M106 321h1M492 321h1M522 321h1M530 321h8M582 321h1M16 322h1M61 322h1M76 322h1M106 322h1M492 322h1M522 322h1M537 322h1M582 322h1M17 323h1M61 323h1M76 323h1M107 323h1M491 323h1M522 323h1M537 323h1M581 323h1M17 324h1M61 324h1M76 324h1M107 324h1M491 324h1M522 324h1M537 324h1M581 324h1M17 325h1M61 325h1M76 325h1M107 325h1M491 325h1M522 325h1M537 325h1M581 325h1M17 326h1M61 326h1M77 326h1M107 326h1M491 326h1M521 326h1M537 326h1M581 326h1M17 327h1M61 327h1M77 327h1M107 327h1M491 327h1M521 327h1M537 327h1M581 327h1M17 328h1M62 328h1M77 328h1M107 328h1M491 328h1M521 328h1M536 328h1M581 328h1M17 329h1M62 329h1M77 329h1M108 329h1M490 329h1M521 329h1M536 329h1M581 329h1M17 330h1M62 330h1M77 330h1M108 330h1M490 330h1M521 330h1M536 330h1M581 330h1M17 331h1M62 331h1M77 331h1M108 331h1M490 331h1M521 331h1M536 331h1M581 331h1M17 332h1M62 332h1M77 332h1M108 332h1M490 332h1M521 332h1M536 332h1M581 332h1M18 333h1M62 333h1M77 333h1M108 333h1M490 333h1M521 333h1M536 333h1M580 333h1M18 334h1M63 334h1M78 334h1M108 334h1M490 334h1M520 334h1M535 334h1M580 334h1M18 335h1M63 335h1M78 335h1M108 335h1M490 335h1M520 335h1M535 335h1M580 335h1M18 336h1M63 336h1M74 336h5M109 336h1M489 336h1M520 336h1M535 336h1M580 336h1M18 337h1M63 337h1M68 337h6M78 337h1M109 337h1M489 337h1M520 337h1M535 337h1M580 337h1M18 338h1M64 338h4M78 338h1M109 338h1M489 338h1M520 338h1M534 338h1M580 338h1M18 339h1M64 339h1M79 339h1M109 339h1M489 339h1M519 339h4M534 339h1M580 339h1M18 340h1M64 340h1M79 340h1M109 340h1M489 340h1M519 340h1M523 340h4M534 340h1M580 340h1M18 341h1M64 341h1M79 341h1M110 341h1M488 341h1M519 341h1M527 341h4M534 341h1M580 341h1M18 342h1M64 342h1M79 342h1M110 342h1M488 342h1M519 342h1M531 342h4M580 342h1M19 343h1M64 343h1M80 343h1M110 343h1M488 343h1M518 343h1M534 343h1M579 343h1M19 344h1M65 344h1M80 344h1M110 344h1M488 344h1M518 344h1M533 344h1M579 344h1M19 345h1M65 345h1M80 345h1M111 345h1M487 345h1M518 345h1M533 345h1M579 345h1M19 346h1M65 346h1M80 346h1M111 346h1M487 346h1M518 346h1M533 346h1M579 346h1M19 347h1M65 347h1M81 347h1M111 347h1M487 347h1M517 347h1M533 347h1M579 347h1M19 348h1M65 348h1M81 348h1M112 348h1M486 348h1M517 348h1M533 348h1M579 348h1M19 349h1M65 349h1M81 349h1M112 349h1M486 349h1M517 349h1M533 349h1M579 349h1M19 350h1M66 350h1M81 350h1M112 350h1M486 350h1M517 350h1M532 350h1M579 350h1M20 351h1M66 351h1M82 351h1M113 351h1M485 351h1M516 351h1M532 351h1M578 351h1M20 352h1M66 352h1M82 352h1M113 352h1M485 352h1M516 352h1M532 352h1M578 352h1M20 353h1M66 353h1M82 353h1M113 353h1M485 353h1M516 353h1M532 353h1M578 353h1M20 354h1M67 354h1M82 354h1M114 354h1M484 354h1M516 354h1M531 354h1M578 354h1M20 355h1M67 355h1M79 355h3M83 355h1M114 355h1M484 355h1M515 355h1M531 355h1M578 355h1M21 356h1M67 356h1M75 356h4M83 356h1M114 356h1M484 356h1M515 356h1M531 356h1M577 356h1M21 357h1M67 357h1M71 357h4M83 357h1M114 357h1M484 357h1M515 357h1M531 357h1M577 357h1M21 358h1M67 358h4M83 358h1M115 358h1M483 358h1M515 358h1M531 358h1M577 358h1M21 359h1M68 359h1M84 359h1M115 359h1M483 359h1M514 359h1M516 359h3M530 359h1M577 359h1M21 360h1M68 360h1M84 360h1M115 360h1M483 360h1M514 360h1M519 360h4M530 360h1M577 360h1M22 361h1M68 361h1M84 361h1M116 361h1M482 361h1M514 361h1M523 361h4M530 361h1M576 361h1M22 362h1M68 362h1M85 362h1M116 362h1M482 362h1M513 362h1M527 362h4M576 362h1M22 363h1M69 363h1M85 363h1M116 363h1M482 363h1M513 363h1M529 363h1M576 363h1M22 364h1M69 364h1M85 364h1M117 364h1M481 364h1M513 364h1M529 364h1M576 364h1M23 365h1M69 365h1M85 365h1M117 365h1M481 365h1M513 365h1M529 365h1M575 365h1M23 366h1M69 366h1M86 366h1M117 366h1M481 366h1M512 366h1M529 366h1M575 366h1M23 367h1M70 367h1M86 367h1M118 367h1M480 367h1M512 367h1M528 367h1M575 367h1M23 368h1M70 368h1M86 368h1M118 368h1M480 368h1M512 368h1M528 368h1M575 368h1M24 369h1M71 369h1M86 369h1M118 369h1M480 369h1M512 369h1M527 369h1M574 369h1M24 370h1M71 370h1M87 370h1M119 370h1M479 370h1M511 370h1M527 370h1M574 370h1M24 371h1M71 371h1M87 371h1M119 371h1M479 371h1M511 371h1M527 371h1M574 371h1M25 372h1M72 372h1M88 372h1M119 372h1M479 372h1M510 372h1M526 372h1M573 372h1M25 373h1M72 373h1M88 373h1M120 373h1M478 373h1M510 373h1M526 373h1M573 373h1M25 374h1M72 374h1M86 374h2M89 374h1M120 374h1M478 374h1M509 374h1M526 374h1M573 374h1M25 375h1M73 375h1M83 375h3M89 375h1M121 375h1M477 375h1M509 375h1M525 375h1M573 375h1M26 376h1M73 376h1M79 376h4M89 376h1M121 376h1M477 376h1M509 376h1M525 376h1M572 376h1M26 377h1M73 377h1M76 377h3M90 377h1M122 377h1M476 377h1M508 377h1M510 377h2M525 377h1M572 377h1M26 378h1M73 378h3M90 378h1M122 378h1M476 378h1M508 378h1M512 378h2M525 378h1M572 378h1M27 379h1M74 379h1M90 379h1M123 379h1M475 379h1M508 379h1M514 379h2M524 379h1M571 379h1M27 380h1M74 380h1M90 380h1M123 380h1M475 380h1M508 380h1M516 380h3M524 380h1M571 380h1M27 381h1M74 381h1M91 381h1M124 381h1M474 381h1M507 381h1M519 381h2M524 381h1M571 381h1M28 382h1M75 382h1M91 382h1M124 382h1M438 382h8M474 382h1M507 382h1M521 382h3M570 382h1M28 383h1M75 383h1M91 383h1M125 383h1M430 383h8M473 383h1M507 383h1M523 383h1M570 383h1M28 384h1M76 384h1M91 384h1M473 384h1M507 384h1M522 384h1M570 384h1M29 385h1M76 385h1M92 385h1M123 385h2M126 385h1M472 385h1M506 385h1M522 385h1M569 385h1M29 386h1M76 386h1M92 386h1M121 386h2M126 386h1M472 386h1M506 386h1M522 386h1M569 386h1M29 387h1M77 387h1M93 387h1M119 387h2M127 387h1M471 387h1M505 387h1M521 387h1M569 387h1M30 388h1M77 388h1M93 388h1M117 388h2M127 388h1M471 388h1M505 388h1M521 388h1M568 388h1M30 389h1M78 389h1M94 389h1M115 389h2M128 389h1M426 389h1M470 389h1M504 389h1M520 389h1M568 389h1M30 390h1M78 390h1M94 390h1M113 390h2M128 390h1M427 390h1M470 390h1M504 390h1M520 390h1M568 390h1M31 391h1M79 391h1M95 391h1M110 391h3M129 391h1M428 391h1M469 391h1M503 391h1M519 391h1M567 391h1M31 392h1M79 392h1M94 392h2M108 392h2M129 392h1M429 392h1M469 392h1M503 392h1M519 392h1M567 392h1M31 393h1M80 393h1M92 393h2M96 393h1M106 393h2M130 393h1M430 393h2M468 393h1M502 393h1M518 393h1M567 393h1M31 394h1M80 394h1M90 394h2M96 394h1M104 394h2M130 394h1M432 394h1M468 394h1M502 394h1M518 394h1M567 394h1M32 395h1M81 395h1M88 395h2M97 395h1M102 395h2M131 395h1M433 395h1M467 395h1M501 395h2M517 395h1M566 395h1M32 396h1M81 396h1M86 396h2M97 396h1M100 396h2M131 396h1M434 396h1M467 396h1M501 396h1M503 396h2M517 396h1M566 396h1M32 397h1M81 397h1M84 397h2M98 397h2M132 397h1M435 397h1M466 397h1M500 397h1M505 397h2M517 397h1M566 397h1M33 398h1M82 398h2M98 398h1M132 398h1M466 398h1M500 398h1M507 398h2M516 398h1M565 398h1M33 399h1M82 399h1M99 399h1M133 399h1M465 399h1M499 399h1M509 399h2M516 399h1M565 399h1M34 400h1M83 400h1M99 400h1M134 400h1M417 400h1M464 400h1M499 400h1M511 400h2M515 400h1M564 400h1M34 401h1M83 401h1M100 401h1M134 401h1M418 401h1M464 401h1M498 401h1M513 401h3M564 401h1M35 402h1M84 402h1M100 402h1M135 402h1M418 402h1M463 402h1M498 402h1M514 402h1M563 402h1M35 403h1M84 403h1M101 403h1M136 403h1M419 403h1M462 403h1M497 403h1M514 403h1M563 403h1M36 404h1M85 404h1M101 404h1M136 404h1M420 404h1M462 404h1M497 404h1M513 404h1M562 404h1M36 405h1M85 405h1M102 405h1M137 405h1M420 405h1M461 405h1M496 405h1M513 405h1M562 405h1M36 406h1M86 406h1M102 406h1M137 406h1M421 406h1M461 406h1M496 406h1M512 406h1M562 406h1M37 407h1M86 407h1M103 407h1M138 407h1M421 407h1M460 407h1M495 407h1M512 407h1M561 407h1M37 408h1M87 408h1M103 408h1M139 408h1M422 408h1M459 408h1M495 408h1M511 408h1M561 408h1M38 409h1M87 409h1M104 409h1M139 409h1M423 409h1M459 409h1M494 409h1M511 409h1M560 409h1M38 410h1M88 410h1M103 410h2M140 410h1M423 410h1M458 410h1M494 410h1M510 410h1M560 410h1M39 411h1M88 411h1M101 411h2M105 411h1M141 411h1M424 411h1M457 411h1M493 411h1M510 411h1M559 411h1M39 412h1M89 412h1M99 412h2M106 412h1M141 412h1M457 412h1M492 412h1M509 412h1M559 412h1M40 413h1M89 413h1M97 413h2M106 413h1M142 413h1M456 413h1M492 413h2M509 413h1M558 413h1M40 414h1M90 414h1M95 414h2M107 414h1M143 414h1M455 414h1M491 414h1M494 414h2M508 414h1M558 414h1M40 415h1M90 415h1M93 415h2M108 415h1M144 415h1M454 415h1M490 415h1M496 415h1M508 415h1M558 415h1M41 416h1M91 416h2M108 416h1M144 416h1M454 416h2M490 416h1M497 416h2M507 416h1M557 416h1M41 417h1M90 417h2M109 417h1M145 417h1M453 417h1M456 417h1M489 417h1M499 417h2M507 417h1M557 417h1M42 418h1M88 418h2M92 418h1M110 418h1M146 418h1M452 418h1M457 418h2M488 418h1M501 418h1M506 418h1M556 418h1M42 419h1M86 419h2M93 419h1M110 419h1M147 419h1M451 419h1M459 419h1M488 419h1M502 419h2M505 419h1M556 419h1M43 420h1M84 420h2M93 420h1M111 420h1M148 420h1M450 420h1M460 420h1M487 420h1M504 420h3M555 420h1M43 421h1M83 421h1M94 421h1M111 421h1M149 421h1M449 421h1M461 421h2M487 421h1M504 421h1M507 421h2M555 421h1M44 422h1M81 422h2M94 422h1M112 422h1M149 422h1M449 422h1M463 422h1M486 422h1M504 422h1M509 422h2M554 422h1M44 423h1M79 423h2M95 423h1M112 423h1M150 423h1M448 423h1M464 423h1M486 423h1M503 423h1M511 423h1M554 423h1M44 424h1M77 424h2M95 424h1M113 424h1M151 424h1M447 424h1M465 424h1M485 424h1M503 424h1M512 424h2M554 424h1M45 425h1M76 425h1M96 425h1M114 425h1M152 425h1M446 425h1M466 425h2M484 425h1M502 425h1M514 425h2M553 425h1M45 426h1M74 426h2M97 426h1M114 426h2M153 426h1M445 426h1M468 426h1M483 426h1M501 426h1M516 426h1M553 426h1M46 427h1M72 427h2M97 427h1M112 427h2M116 427h1M153 427h1M445 427h1M469 427h1M482 427h1M501 427h1M517 427h2M552 427h1M46 428h1M70 428h2M98 428h1M111 428h1M116 428h1M154 428h1M444 428h1M470 428h2M482 428h1M500 428h1M519 428h2M552 428h1M47 429h1M68 429h2M99 429h1M110 429h1M117 429h1M155 429h1M443 429h1M472 429h1M481 429h2M499 429h1M521 429h1M551 429h1M47 430h1M67 430h1M100 430h1M108 430h2M118 430h1M156 430h1M442 430h1M473 430h1M480 430h1M483 430h2M498 430h1M522 430h2M551 430h1M48 431h1M65 431h2M100 431h1M107 431h1M119 431h1M157 431h1M441 431h1M474 431h2M479 431h1M485 431h1M498 431h1M524 431h2M550 431h1M48 432h1M63 432h2M101 432h1M106 432h1M119 432h1M158 432h1M440 432h1M476 432h1M479 432h1M486 432h1M497 432h1M526 432h2M550 432h1M49 433h1M61 433h2M102 433h1M104 433h2M120 433h1M159 433h1M439 433h1M477 433h2M487 433h2M496 433h1M528 433h1M549 433h1M49 434h1M60 434h1M102 434h2M121 434h1M160 434h1M438 434h1M477 434h1M489 434h1M496 434h1M529 434h2M549 434h1M50 435h1M58 435h2M103 435h1M122 435h1M161 435h1M437 435h1M476 435h1M490 435h1M495 435h1M531 435h2M548 435h1M50 436h1M56 436h2M104 436h1M122 436h1M162 436h1M436 436h1M476 436h1M491 436h2M494 436h1M533 436h1M548 436h1M51 437h1M54 437h2M105 437h1M123 437h1M163 437h1M435 437h1M475 437h1M493 437h1M534 437h2M547 437h1M51 438h1M53 438h1M105 438h1M124 438h1M164 438h1M434 438h1M474 438h1M493 438h1M536 438h2M547 438h1M52 439h1M106 439h1M125 439h1M165 439h1M433 439h1M473 439h1M492 439h1M538 439h1M546 439h1M52 440h1M107 440h1M126 440h1M166 440h1M432 440h1M472 440h1M491 440h1M539 440h2M546 440h1M53 441h1M107 441h1M126 441h1M167 441h1M236 441h1M431 441h1M472 441h1M491 441h1M541 441h2M545 441h1M54 442h1M108 442h1M126 442h2M168 442h1M236 442h1M430 442h1M471 442h1M490 442h1M543 442h2M54 443h1M109 443h1M125 443h1M128 443h1M169 443h1M235 443h1M429 443h1M470 443h1M489 443h1M544 443h1M55 444h1M110 444h1M123 444h2M129 444h1M170 444h1M235 444h1M428 444h1M469 444h1M488 444h1M543 444h1M56 445h1M110 445h1M122 445h1M130 445h1M171 445h2M234 445h1M426 445h2M468 445h1M470 445h1M488 445h1M542 445h1M56 446h1M111 446h1M121 446h1M131 446h1M173 446h1M234 446h1M425 446h1M467 446h1M471 446h1M487 446h1M542 446h1M57 447h1M112 447h1M120 447h1M131 447h1M174 447h1M233 447h1M424 447h1M467 447h1M472 447h1M486 447h1M541 447h1M57 448h1M113 448h1M119 448h1M132 448h1M175 448h1M233 448h1M423 448h1M466 448h1M473 448h1M485 448h1M541 448h1M58 449h1M114 449h1M117 449h2M133 449h1M175 449h2M232 449h1M421 449h2M465 449h1M474 449h1M484 449h1M540 449h1M59 450h1M114 450h1M116 450h1M134 450h1M174 450h1M177 450h2M232 450h1M338 450h1M420 450h1M464 450h1M475 450h2M484 450h1M539 450h1M59 451h1M115 451h1M135 451h1M173 451h1M179 451h1M231 451h1M338 451h1M419 451h1M463 451h1M477 451h1M483 451h1M539 451h1M60 452h1M116 452h1M136 452h1M172 452h1M180 452h1M231 452h1M339 452h1M418 452h1M462 452h1M478 452h1M482 452h1M538 452h1M61 453h1M117 453h1M137 453h1M172 453h1M181 453h1M339 453h1M417 453h1M461 453h1M479 453h1M481 453h1M537 453h1M61 454h1M118 454h1M138 454h1M171 454h1M182 454h2M312 454h1M339 454h1M415 454h2M460 454h1M480 454h1M537 454h1M62 455h1M119 455h1M139 455h1M170 455h1M184 455h1M312 455h1M339 455h1M414 455h1M459 455h1M479 455h1M536 455h1M63 456h1M119 456h1M139 456h2M169 456h1M185 456h1M312 456h1M340 456h1M413 456h1M458 456h1M479 456h1M535 456h1M63 457h1M120 457h1M138 457h1M141 457h1M168 457h1M186 457h2M312 457h1M340 457h1M411 457h2M457 457h1M478 457h1M535 457h1M64 458h1M121 458h1M137 458h1M142 458h1M167 458h1M188 458h1M312 458h1M340 458h1M410 458h1M456 458h1M477 458h1M534 458h1M65 459h1M122 459h1M136 459h1M143 459h1M166 459h1M189 459h2M312 459h1M340 459h1M408 459h2M455 459h2M476 459h1M533 459h1M65 460h1M123 460h1M135 460h1M144 460h1M165 460h1M191 460h1M313 460h1M341 460h1M407 460h1M454 460h1M457 460h1M475 460h1M533 460h1M66 461h1M124 461h1M134 461h1M145 461h1M165 461h1M192 461h2M313 461h1M341 461h1M405 461h2M453 461h1M458 461h1M474 461h1M532 461h1M67 462h1M125 462h1M133 462h1M146 462h1M164 462h1M194 462h2M313 462h1M403 462h2M452 462h1M459 462h1M473 462h1M531 462h1M67 463h1M125 463h1M132 463h1M147 463h1M163 463h1M196 463h1M313 463h1M402 463h1M451 463h1M460 463h1M473 463h1M531 463h1M68 464h1M126 464h1M131 464h1M148 464h1M162 464h1M197 464h2M313 464h1M400 464h2M450 464h1M461 464h1M472 464h1M530 464h1M68 465h1M127 465h1M130 465h1M149 465h1M161 465h1M199 465h1M313 465h1M399 465h1M449 465h1M462 465h1M471 465h1M530 465h1M69 466h1M128 466h2M150 466h1M160 466h1M200 466h2M313 466h1M397 466h2M448 466h1M463 466h1M470 466h1M529 466h1M70 467h1M129 467h1M151 467h1M159 467h1M202 467h1M395 467h2M446 467h2M464 467h1M469 467h1M528 467h1M71 468h1M130 468h1M152 468h2M159 468h1M203 468h2M393 468h2M445 468h1M465 468h1M468 468h1M527 468h1M71 469h1M131 469h1M154 469h1M158 469h1M205 469h2M391 469h2M444 469h1M466 469h2M527 469h1M72 470h1M132 470h1M153 470h1M155 470h1M157 470h1M207 470h2M389 470h2M443 470h1M466 470h1M526 470h1M73 471h1M133 471h1M152 471h1M156 471h1M209 471h2M387 471h2M442 471h1M465 471h1M525 471h1M74 472h1M134 472h1M151 472h1M157 472h1M211 472h2M385 472h2M440 472h3M464 472h1M524 472h1M74 473h1M135 473h1M150 473h1M158 473h2M213 473h2M383 473h2M439 473h1M443 473h1M462 473h2M524 473h1M75 474h1M136 474h2M149 474h1M160 474h1M215 474h2M381 474h2M438 474h1M444 474h1M461 474h1M523 474h1M76 475h1M138 475h1M148 475h1M161 475h1M217 475h2M379 475h2M437 475h1M444 475h1M460 475h1M522 475h1M77 476h1M139 476h1M148 476h1M162 476h2M219 476h3M377 476h2M435 476h2M445 476h1M459 476h1M521 476h1M78 477h1M140 477h1M147 477h1M164 477h1M222 477h2M375 477h2M434 477h1M446 477h1M458 477h1M520 477h1M79 478h1M141 478h1M146 478h1M165 478h1M224 478h2M373 478h2M433 478h1M447 478h1M457 478h1M519 478h1M80 479h1M142 479h2M145 479h1M166 479h2M226 479h3M370 479h3M431 479h2M448 479h1M455 479h2M518 479h1M81 480h1M144 480h1M168 480h1M229 480h3M367 480h3M430 480h1M449 480h1M454 480h1M517 480h1M82 481h1M145 481h1M169 481h1M232 481h3M364 481h3M429 481h1M449 481h1M453 481h1M516 481h1M83 482h1M146 482h1M169 482h2M235 482h3M361 482h3M427 482h2M450 482h1M452 482h1M515 482h1M84 483h1M147 483h1M168 483h1M171 483h2M238 483h3M358 483h3M426 483h1M451 483h1M514 483h1M84 484h1M148 484h1M168 484h1M173 484h1M241 484h4M354 484h4M425 484h2M449 484h2M514 484h1M85 485h1M149 485h2M167 485h1M174 485h1M245 485h3M351 485h3M355 485h1M424 485h1M427 485h1M448 485h1M513 485h1M86 486h1M151 486h1M166 486h1M175 486h2M248 486h3M348 486h3M355 486h1M422 486h2M427 486h1M447 486h1M512 486h1M87 487h1M152 487h1M165 487h1M177 487h2M251 487h3M345 487h3M356 487h1M420 487h2M428 487h1M446 487h1M511 487h1M87 488h1M153 488h2M165 488h1M179 488h2M253 488h5M341 488h4M356 488h1M418 488h2M429 488h1M444 488h2M511 488h1M88 489h1M155 489h1M164 489h1M181 489h1M253 489h1M258 489h5M336 489h5M356 489h1M417 489h1M430 489h1M443 489h1M510 489h1M89 490h1M156 490h1M163 490h1M182 490h2M252 490h1M263 490h6M329 490h7M357 490h1M415 490h2M430 490h1M442 490h1M509 490h1M90 491h1M157 491h2M162 491h1M184 491h1M252 491h1M269 491h7M323 491h6M357 491h1M414 491h1M431 491h1M440 491h2M508 491h1M91 492h1M159 492h1M162 492h1M185 492h2M252 492h1M276 492h7M316 492h7M357 492h1M412 492h2M432 492h1M439 492h1M507 492h1M92 493h1M160 493h2M185 493h1M187 493h1M252 493h1M283 493h33M358 493h1M411 493h1M433 493h1M437 493h2M506 493h1M93 494h1M162 494h1M184 494h1M188 494h2M251 494h1M358 494h1M409 494h2M433 494h1M436 494h1M505 494h1M94 495h1M163 495h1M184 495h1M190 495h2M251 495h1M358 495h1M407 495h2M410 495h1M434 495h2M504 495h1M95 496h1M164 496h2M183 496h1M192 496h2M251 496h1M359 496h1M405 496h2M411 496h1M433 496h2M503 496h1M96 497h1M166 497h1M182 497h1M194 497h2M251 497h1M359 497h1M403 497h2M411 497h1M432 497h1M502 497h1M97 498h1M167 498h2M182 498h1M196 498h2M250 498h1M359 498h1M401 498h2M412 498h1M430 498h2M501 498h1M98 499h1M169 499h1M181 499h1M198 499h2M250 499h1M360 499h1M399 499h2M412 499h1M429 499h1M500 499h1M99 500h1M170 500h1M181 500h1M200 500h2M250 500h1M360 500h1M397 500h2M413 500h1M428 500h1M499 500h1M100 501h1M171 501h2M180 501h1M202 501h2M250 501h1M360 501h1M395 501h2M413 501h1M426 501h2M498 501h1M101 502h1M173 502h1M179 502h1M203 502h3M249 502h1M360 502h1M393 502h2M414 502h1M425 502h1M497 502h1M102 503h1M174 503h2M179 503h1M202 503h1M206 503h2M249 503h1M361 503h1M391 503h2M414 503h1M423 503h2M496 503h1M103 504h1M176 504h3M202 504h1M208 504h2M249 504h1M361 504h1M389 504h2M392 504h1M415 504h1M421 504h2M495 504h1M104 505h1M178 505h2M201 505h1M210 505h2M249 505h1M361 505h1M387 505h2M393 505h1M415 505h1M419 505h2M494 505h1M105 506h1M178 506h1M180 506h1M201 506h1M212 506h2M248 506h1M362 506h1M385 506h2M393 506h1M416 506h1M418 506h1M493 506h1M106 507h1M177 507h1M181 507h2M200 507h1M214 507h3M248 507h1M362 507h1M381 507h4M394 507h1M416 507h2M492 507h1M107 508h1M177 508h1M183 508h2M200 508h1M217 508h4M248 508h1M362 508h1M377 508h4M394 508h1M414 508h2M417 508h1M491 508h1M108 509h1M176 509h1M185 509h2M199 509h1M221 509h4M248 509h1M363 509h1M374 509h3M395 509h1M412 509h2M418 509h1M490 509h1M109 510h1M176 510h1M187 510h1M199 510h1M221 510h1M225 510h2M247 510h1M363 510h1M372 510h2M395 510h1M410 510h2M418 510h1M489 510h1M110 511h1M175 511h1M188 511h2M198 511h1M221 511h1M227 511h2M247 511h1M363 511h1M370 511h2M374 511h1M396 511h1M408 511h2M419 511h1M487 511h2M111 512h2M174 512h1M190 512h2M198 512h1M220 512h1M229 512h3M247 512h1M364 512h1M366 512h4M374 512h1M396 512h1M406 512h2M419 512h1M486 512h1M113 513h1M174 513h1M192 513h2M197 513h1M220 513h1M232 513h4M247 513h1M362 513h4M375 513h1M397 513h1M404 513h2M420 513h1M485 513h1M114 514h1M173 514h1M194 514h4M219 514h1M236 514h4M246 514h1M359 514h3M375 514h1M397 514h1M402 514h2M420 514h1M483 514h2M115 515h2M173 515h1M197 515h2M219 515h1M240 515h4M246 515h1M355 515h4M375 515h1M398 515h1M400 515h2M421 515h1M482 515h1M117 516h1M172 516h1M199 516h2M218 516h1M239 516h1M244 516h3M351 516h4M376 516h1M398 516h2M422 516h1M481 516h1M118 517h1M171 517h1M201 517h2M218 517h1M239 517h1M247 517h4M347 517h4M355 517h1M376 517h1M395 517h3M422 517h1M480 517h1M119 518h1M171 518h1M203 518h2M218 518h1M239 518h1M251 518h4M343 518h4M355 518h1M376 518h1M393 518h2M423 518h1M479 518h1M120 519h1M170 519h1M205 519h2M217 519h1M238 519h1M255 519h4M339 519h4M355 519h1M376 519h1M391 519h2M423 519h1M478 519h1M121 520h1M170 520h1M207 520h2M217 520h1M238 520h1M259 520h6M334 520h5M356 520h1M377 520h1M389 520h2M424 520h1M477 520h1M122 521h1M169 521h1M209 521h3M216 521h1M238 521h1M259 521h1M265 521h7M326 521h8M336 521h1M356 521h1M377 521h1M387 521h2M424 521h1M476 521h1M123 522h1M168 522h1M212 522h2M216 522h1M238 522h1M259 522h1M272 522h16M310 522h16M336 522h1M356 522h1M377 522h1M384 522h3M425 522h1M475 522h1M124 523h1M168 523h1M214 523h3M237 523h1M258 523h1M278 523h1M288 523h22M316 523h1M336 523h1M356 523h1M378 523h1M382 523h2M426 523h1M474 523h1M125 524h1M167 524h1M217 524h3M237 524h1M258 524h1M278 524h1M298 524h1M316 524h1M336 524h1M357 524h1M378 524h4M426 524h1M472 524h2M126 525h2M167 525h1M220 525h4M237 525h1M258 525h1M278 525h1M298 525h1M316 525h1M337 525h1M357 525h1M375 525h4M427 525h1M471 525h1M128 526h1M166 526h1M224 526h3M237 526h1M258 526h1M278 526h1M298 526h1M316 526h1M337 526h1M357 526h1M372 526h3M427 526h1M470 526h1M129 527h1M166 527h1M227 527h2M236 527h1M257 527h1M278 527h1M298 527h1M316 527h1M337 527h1M357 527h1M369 527h3M428 527h1M468 527h2M130 528h2M165 528h1M229 528h3M236 528h1M257 528h1M278 528h1M298 528h1M316 528h1M337 528h1M358 528h1M367 528h2M428 528h1M467 528h1M132 529h1M164 529h1M232 529h5M257 529h1M278 529h1M298 529h1M316 529h1M337 529h1M358 529h1M363 529h4M429 529h1M466 529h1M133 530h2M164 530h1M236 530h4M257 530h1M277 530h1M298 530h1M317 530h1M337 530h1M358 530h5M429 530h1M464 530h2M135 531h1M163 531h1M240 531h4M256 531h1M277 531h1M297 531h1M317 531h1M338 531h1M354 531h5M430 531h1M462 531h2M136 532h2M163 532h1M244 532h4M256 532h1M277 532h1M297 532h1M317 532h1M338 532h1M350 532h4M431 532h1M461 532h1M138 533h2M162 533h1M248 533h6M256 533h1M277 533h1M297 533h1M317 533h1M338 533h1M344 533h6M431 533h1M459 533h2M140 534h1M161 534h1M254 534h6M277 534h1M297 534h1M317 534h1M338 534h6M432 534h1M458 534h1M141 535h2M161 535h1M260 535h4M277 535h1M297 535h1M317 535h1M334 535h4M432 535h1M456 535h2M143 536h1M160 536h1M264 536h6M277 536h1M297 536h1M317 536h1M328 536h6M433 536h1M455 536h1M144 537h2M160 537h1M270 537h17M297 537h1M311 537h17M433 537h1M453 537h2M146 538h1M159 538h1M287 538h24M434 538h1M452 538h1M147 539h2M158 539h1M297 539h1M435 539h1M450 539h2M149 540h1M158 540h1M297 540h1M435 540h1M449 540h1M150 541h2M157 541h1M297 541h1M436 541h1M447 541h2M152 542h1M157 542h1M297 542h1M436 542h1M445 542h2M153 543h2M156 543h1M297 543h1M437 543h1M444 543h1M155 544h2M297 544h1M437 544h1M442 544h2M157 545h1M297 545h1M438 545h1M441 545h1M158 546h2M297 546h1M439 546h2M160 547h2M297 547h1M437 547h2M162 548h2M297 548h1M435 548h2M164 549h2M297 549h1M433 549h2M166 550h2M297 550h1M431 550h2M168 551h2M297 551h1M429 551h2M170 552h2M297 552h1M427 552h2M172 553h2M297 553h1M425 553h2M174 554h3M297 554h1M422 554h3M177 555h2M297 555h1M420 555h2M179 556h2M297 556h1M418 556h2M181 557h2M297 557h1M416 557h2M183 558h3M297 558h1M413 558h3M186 559h2M297 559h1M411 559h2M188 560h2M297 560h1M409 560h2M190 561h2M297 561h1M407 561h2M192 562h3M297 562h1M404 562h3M195 563h2M297 563h1M402 563h2M197 564h2M297 564h1M400 564h2M199 565h2M297 565h1M398 565h2M201 566h3M297 566h1M395 566h3M204 567h3M297 567h1M391 567h4M207 568h4M297 568h1M388 568h3M211 569h3M297 569h1M385 569h3M214 570h3M297 570h1M382 570h3M217 571h3M297 571h1M379 571h3M220 572h3M297 572h1M376 572h3M223 573h3M297 573h1M372 573h4M226 574h4M297 574h1M369 574h3M230 575h4M297 575h1M365 575h4M234 576h4M297 576h1M361 576h4M238 577h5M297 577h1M356 577h5M243 578h5M297 578h1M351 578h5M248 579h7M297 579h1M343 579h8M255 580h10M297 580h1M333 580h10M265 581h10M297 581h1M323 581h10M275 582h10M297 582h1M313 582h10M285 583h28"/>
</g>
<g class="s" xml:space="preserve" style="will-change:opacity;filter:grayscale(0)">
<text x="605.25" y="14" class="w">Astrolog 5.40</text>
<text x="605.25" y="24" class="l">&quot;Anonymous&quot;</text>
<text x="605.25" y="34" class="l">Wed September 7, 2005</text>
<text x="605.25" y="44" class="l">10:03pm (ST +8:00 GMT)</text>
<text x="605.25" y="54" class="l">&quot;Taiwan&quot;</text>
<text x="605.25" y="64" class="l">121°36E 23°29N</text>
<text x="605.25" y="74" class="l">Placidus houses.</text>
<text x="605.25" y="84" class="l">Tropical, Geocentric.</text>
<text x="605.25" y="94" class="l">Julian Day = 2453621.0854</text>
<text x="611.25" y="114" class="r">1st house:</text>
<text x="683.25" y="114" class="g">0Gem29</text>
<text x="611.25" y="124" class="y">2nd house:</text>
<text x="677.25" y="124" class="g">26Gem37</text>
<text x="611.25" y="134" class="g">3rd house:</text>
<text x="677.25" y="134" class="b">20Can45</text>
<text x="611.25" y="144" class="b">4th house:</text>
<text x="677.25" y="144" class="r">16Leo39</text>
<text x="611.25" y="154" class="r">5th house:</text>
<text x="677.25" y="154" class="y">17Vir22</text>
<text x="611.25" y="164" class="y">6th house:</text>
<text x="677.25" y="164" class="g">23Lib31</text>
<text x="611.25" y="174" class="g">7th house:</text>
<text x="683.25" y="174" class="r">0Sag29</text>
<text x="611.25" y="184" class="b">8th house:</text>
<text x="677.25" y="184" class="r">26Sag37</text>
<text x="611.25" y="194" class="r">9th house:</text>
<text x="677.25" y="194" class="y">20Cap45</text>
<text x="605.25" y="204" class="y">10th house:</text>
<text x="677.25" y="204" class="g">16Aqu39</text>
<text x="605.25" y="214" class="g">11th house:</text>
<text x="677.25" y="214" class="b">17Pis22</text>
<text x="605.25" y="224" class="b">12th house:</text>
<text x="677.25" y="224" class="r">23Ari31</text>
<text x="611.25" y="244" class="r">Sun:</text>
<text x="641.25" y="244" class="y">15Vir03</text>
<text x="695.25" y="244" class="l">- 0°00'</text>
<text x="605.25" y="254" class="b">Moon:</text>
<text x="641.25" y="254" class="g">27Lib50</text>
<text x="695.25" y="254" class="l">- 1°17'</text>
<text x="605.25" y="264" class="g">Merc:</text>
<text x="647.25" y="264" class="y">5Vir20</text>
<text x="695.25" y="264" class="l">+ 1°44'</text>
<text x="605.25" y="274" class="g">Venu:</text>
<text x="641.25" y="274" class="g">25Lib15</text>
<text x="695.25" y="274" class="l">- 0°28'</text>
<text x="605.25" y="284" class="r">Mars:</text>
<text x="641.25" y="284" class="y">19Tau23</text>
<text x="695.25" y="284" class="l">- 2°41'</text>
<text x="605.25" y="294" class="r">Jupi:</text>
<text x="641.25" y="294" class="g">19Lib47</text>
<text x="695.25" y="294" class="l">+ 1°06'</text>
<text x="605.25" y="304" class="y">Satu:</text>
<text x="647.25" y="304" class="r">6Leo33</text>
<text x="695.25" y="304" class="l">+ 0°21'</text>
<text x="605.25" y="314" class="g">Uran:</text>
<text x="647.25" y="314" class="b">8Pis32</text>
<text x="683.25" y="314" class="w">R</text>
<text x="695.25" y="314" class="l">- 0°49'</text>
<text x="605.25" y="324" class="b">Nept:</text>
<text x="641.25" y="324" class="g">15Aqu26</text>
<text x="683.25" y="324" class="w">R</text>
<text x="695.25" y="324" class="l">- 0°09'</text>
<text x="605.25" y="334" class="b">Plut:</text>
<text x="641.25" y="334" class="r">21Sag51</text>
<text x="695.25" y="334" class="l">+ 7°55'</text>
<text x="605.25" y="344" class="c">Node:</text>
<text x="641.25" y="344" class="r">15Ari06</text>
<text x="683.25" y="344" class="w">R</text>
<text x="695.25" y="344" class="l">+ 0°00'</text>
<text x="605.25" y="364" class="l">Fire: 3, Earth: 3,</text>
<text x="605.25" y="374" class="l">Air : 6, Water: 1</text>
<text x="605.25" y="384" class="l">Car: 4, Fix: 4, Mut: 5</text>
<text x="605.25" y="394" class="l">Yang: 9, Yin: 4</text>
<text x="605.25" y="404" class="l">M: 5, N: 6, A: 4, D: 7</text>
<text x="605.25" y="414" class="l">Ang: 4, Suc: 2, Cad: 5</text>
<text x="605.25" y="424" class="l">Learn: 6, Share: 7</text>
</g>
<g class="d" style="will-change:opacity;filter:grayscale(0)">
<text fill="#ff0000" stroke="#ff0000" stroke-width="0.5"><tspan x="92.04" y="350.75" font-size="11.66" textLength="6.98" lengthAdjust="spacingAndGlyphs">1</tspan></text>
<text fill="#ffff00" stroke="#ffff00" stroke-width="0.5"><tspan x="131.59" y="433.75" font-size="11.46" textLength="6.13" lengthAdjust="spacingAndGlyphs">2</tspan></text>
<text fill="#00ff00" stroke="#00ff00" stroke-width="0.5"><tspan x="202.50" y="490.59" font-size="11.24" textLength="6.29" lengthAdjust="spacingAndGlyphs">3</tspan></text>
<text fill="#0000ff" stroke="#0000ff" stroke-width="0.5"><tspan x="301.82" y="513.75" font-size="11.66" textLength="5.65" lengthAdjust="spacingAndGlyphs">4</tspan></text>
<text fill="#ff0000" stroke="#ff0000" stroke-width="0.5"><tspan x="416.20" y="475.59" font-size="11.44" textLength="6.72" lengthAdjust="spacingAndGlyphs">5</tspan></text>
<text fill="#ffff00" stroke="#ffff00" stroke-width="0.5"><tspan x="495.28" y="369.59" font-size="11.24" textLength="6.33" lengthAdjust="spacingAndGlyphs">6</tspan></text>
<text fill="#00ff00" stroke="#00ff00" stroke-width="0.5"><tspan x="500.42" y="256.75" font-size="11.66" textLength="6.46" lengthAdjust="spacingAndGlyphs">7</tspan></text>
<text fill="#0000ff" stroke="#0000ff" stroke-width="0.5"><tspan x="461.30" y="173.59" font-size="11.24" textLength="6.41" lengthAdjust="spacingAndGlyphs">8</tspan></text>
<text fill="#ff0000" stroke="#ff0000" stroke-width="0.5"><tspan x="390.28" y="116.59" font-size="11.24" textLength="6.33" lengthAdjust="spacingAndGlyphs">9</tspan></text>
<text fill="#ffff00" stroke="#ffff00" stroke-width="0.5"><tspan x="287.04" y="93.75" font-size="11.66" textLength="6.98" lengthAdjust="spacingAndGlyphs">1</tspan><tspan x="295.37" y="93.58" font-size="11.23" textLength="6.31" lengthAdjust="spacingAndGlyphs">0</tspan></text>
<text fill="#00ff00" stroke="#00ff00" stroke-width="0.5"><tspan x="172.04" y="131.75" font-size="11.66" textLength="6.98" lengthAdjust="spacingAndGlyphs">1</tspan><tspan x="180.04" y="131.75" font-size="11.66" textLength="6.98" lengthAdjust="spacingAndGlyphs">1</tspan></text>
<text fill="#0000ff" stroke="#0000ff" stroke-width="0.5"><tspan x="93.04" y="237.75" font-size="11.66" textLength="6.98" lengthAdjust="spacingAndGlyphs">1</tspan><tspan x="101.59" y="237.75" font-size="11.46" textLength="6.13" lengthAdjust="spacingAndGlyphs">2</tspan></text>
<text fill="#ffff00" stroke="#ffff00" stroke-width="0.6"><tspan x="326.80" y="131.70" font-size="22.50" textLength="13.40" lengthAdjust="spacingAndGlyphs">M</tspan><tspan x="339.50" y="131.40" font-size="21.69" textLength="6.72" lengthAdjust="spacingAndGlyphs">C</tspan></text>
<text fill="#ff0000" stroke="#ff0000" stroke-width="0.6"><tspan x="111.09" y="307.70" font-size="22.50" textLength="4.85" lengthAdjust="spacingAndGlyphs">A</tspan><tspan x="117.62" y="307.45" font-size="18.12" textLength="4.74" lengthAdjust="spacingAndGlyphs">s</tspan><tspan x="123.75" y="307.45" font-size="18.12" textLength="4.45" lengthAdjust="spacingAndGlyphs">c</tspan></text>
</g>
</svg>
</body></html>
